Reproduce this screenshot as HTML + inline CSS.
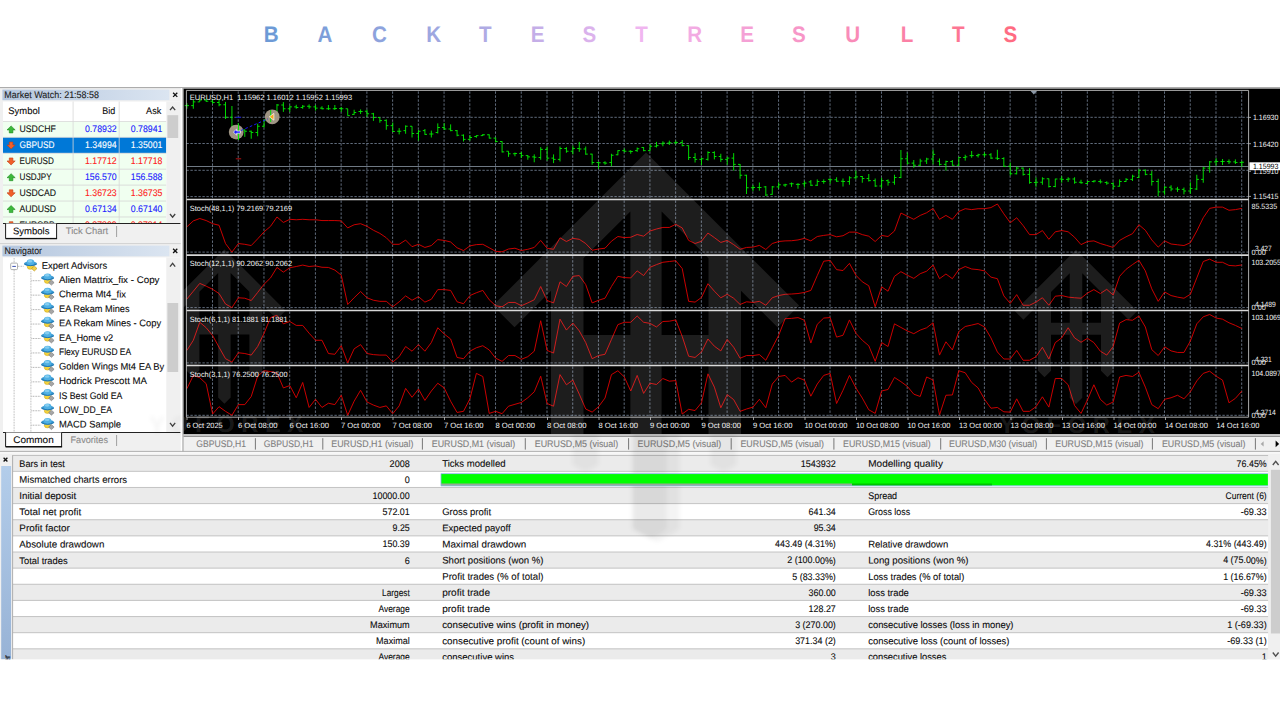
<!DOCTYPE html>
<html lang="en">
<head>
<meta charset="utf-8">
<title>Backtest Results</title>
<style>
html,body{margin:0;padding:0;background:#fff;}
body{width:1280px;height:720px;overflow:hidden;position:relative;font-family:"Liberation Sans",Arial,sans-serif;}
h1{margin:0;position:absolute;left:0;top:0;width:1280px;height:70px;font-size:21.6px;font-weight:bold;}
h1 svg{display:block;}
#shot{position:absolute;left:0;top:0;width:1280px;height:720px;}
#shot svg{display:block;}
svg text{font-family:"Liberation Sans",Arial,sans-serif;white-space:pre;text-rendering:geometricPrecision;}
</style>
</head>
<body>
<h1 aria-label="BACKTEST RESULTS">
<svg width="1280" height="70" viewBox="0 0 1280 70">
<defs>
<linearGradient id="gHead" gradientUnits="userSpaceOnUse" x1="288.04" y1="0" x2="1105.43" y2="0">
<stop offset="0" stop-color="#6c9ad6"/>
<stop offset="0.27" stop-color="#a8a9e2"/>
<stop offset="0.5" stop-color="#f0b6f0"/>
<stop offset="0.75" stop-color="#f890c0"/>
<stop offset="1" stop-color="#ff6a80"/>
</linearGradient>
</defs>
<text y="41.8" font-size="22.4" font-weight="bold" fill="url(#gHead)" transform="scale(0.92 1)"><tspan x="286.75 345.17 404.3 463.38 520.77 577.04 633.18 690.55">BACKTEST</tspan> <tspan x="746.91 804.76 861.01 918.81 979.03 1034.9 1090.63">RESULTS</tspan></text>
</svg>
</h1>
<div id="shot">
<svg width="1280" height="720" viewBox="0 0 1280 720">
<defs>
<linearGradient id="gTitle" x1="0" y1="0" x2="1" y2="0">
<stop offset="0" stop-color="#b4c6de"/>
<stop offset="1" stop-color="#dbe5f1"/>
</linearGradient>
<linearGradient id="gStrip" x1="0" y1="0" x2="0" y2="1">
<stop offset="0" stop-color="#b3cdea"/>
<stop offset="1" stop-color="#98b3d6"/>
</linearGradient>
<clipPath id="cShot"><rect x="0" y="87.6" width="1280" height="571.6"/></clipPath>
<clipPath id="cMW"><rect x="3" y="121" width="163.3" height="102.2"/></clipPath>
<clipPath id="cNav"><rect x="3" y="257.4" width="163.3" height="174.8"/></clipPath>
<clipPath id="cLight"><path clip-rule="evenodd" d="M0 87.6H1280V659.2H0Z M183.6 88.6H1280V434.2H183.6Z M441 473.6H1268V485.8H441Z"/></clipPath>
<clipPath id="cChart"><rect x="183.6" y="88.6" width="1096.4" height="345.6"/></clipPath>
<clipPath id="cTester"><rect x="12.6" y="455" width="1256" height="204.2"/></clipPath>
<filter id="fBlur" x="-20%" y="-20%" width="140%" height="140%"><feGaussianBlur stdDeviation="2"/></filter><g id="wm"><path fill-rule="evenodd" d="M224.4 249.4 L285.65 310.65 L277 319.3 L262.4 304.7 L262.4 370.4 L255.9 376.9 L249.4 370.4 L249.4 334.4 L230.65 334.4 L230.65 397.4 L224.4 403.7 L218.15 397.4 L218.15 334.4 L199.4 334.4 L199.4 370.4 L192.9 376.9 L186.4 370.4 L186.4 304.7 L171.8 319.3 L163.15 310.65 Z M199.4 322.4 L199.4 291.7 L218.15 272.95 L218.15 322.4 Z M249.4 322.4 L249.4 291.7 L230.65 272.95 L230.65 322.4 Z"/><text x="147.7" y="432.2" font-size="23.6" font-weight="bold" textLength="155.4" lengthAdjust="spacing">YOFOREX</text><path fill-rule="evenodd" d="M646 152.5 L799.12 305.62 L777.5 327.25 L741 290.75 L741 455 L724.75 471.25 L708.5 455 L708.5 365 L661.62 365 L661.62 522.5 L646 538.25 L630.38 522.5 L630.38 365 L583.5 365 L583.5 455 L567.25 471.25 L551 455 L551 290.75 L514.5 327.25 L492.88 305.62 Z M583.5 335 L583.5 258.25 L630.38 211.38 L630.38 335 Z M708.5 335 L708.5 258.25 L661.62 211.38 L661.62 335 Z"/><path fill-rule="evenodd" d="M1076 249.8 L1137.25 311.05 L1128.6 319.7 L1114 305.1 L1114 370.8 L1107.5 377.3 L1101 370.8 L1101 334.8 L1082.25 334.8 L1082.25 397.8 L1076 404.1 L1069.75 397.8 L1069.75 334.8 L1051 334.8 L1051 370.8 L1044.5 377.3 L1038 370.8 L1038 305.1 L1023.4 319.7 L1014.75 311.05 Z M1051 322.8 L1051 292.1 L1069.75 273.35 L1069.75 322.8 Z M1101 322.8 L1101 292.1 L1082.25 273.35 L1082.25 322.8 Z"/><text x="999.3" y="432.6" font-size="23.6" font-weight="bold" textLength="155.4" lengthAdjust="spacing">YOFOREX</text></g><g id="wms"><text x="147.7" y="432.2" font-size="23.6" font-weight="bold" textLength="155.4" lengthAdjust="spacing">YOFOREX</text><text x="999.3" y="432.6" font-size="23.6" font-weight="bold" textLength="155.4" lengthAdjust="spacing">YOFOREX</text><path d="M571 430 H597 V464 L584 471 L571 464 Z"/><path d="M631 430 H678 V528 L656 541 L631 528 Z"/><path d="M631 430 H665 V528 L650 538 L631 528 Z"/><path d="M709 430 H735 V464 L722 471 L709 464 Z"/></g>
</defs>
<rect x="0" y="87.6" width="1280" height="571.6" fill="#f0f0f0"/>
<line x1="0" y1="87.6" x2="1280" y2="87.6" stroke="#9a9a9a" stroke-width="0.9"/>
<rect x="2.4" y="89.6" width="167" height="10.6" fill="url(#gTitle)"/>
<text transform="matrix(1 .0005 0 1 4.3 97.5)" font-size="9.6" fill="#1c1c1c" textLength="94.7" lengthAdjust="spacingAndGlyphs" stroke="#1c1c1c" stroke-width="0.1">Market Watch: 21:58:58</text>
<path d="M173.1 92.7 l4.2 4.2 M173.1 96.9 l4.2 -4.2" stroke="#111" stroke-width="1.3" fill="none"/>
<rect x="3" y="101.6" width="177.5" height="122" fill="#ffffff"/>
<rect x="166.3" y="101.6" width="14.2" height="122" fill="#f0f0f0"/>
<g clip-path="url(#cMW)">
<rect x="3" y="121.4" width="163.3" height="15.93" fill="#f0fff0"/>
<path d="M11.1 125.9 l4.1 4 h-2.3 v3 h-3.6 v-3 h-2.3 z" fill="#3cb93c" stroke="#1e8a1e" stroke-width="0.6"/>
<text transform="matrix(1 .0005 0 1 19.5 132.1)" font-size="9.6" fill="#111" textLength="36.3" lengthAdjust="spacingAndGlyphs" stroke="#111" stroke-width="0.1">USDCHF</text>
<text transform="matrix(1 .0005 0 1 116.6 132.1)" font-size="9.6" fill="#2020ff" textLength="31.6" lengthAdjust="spacingAndGlyphs" text-anchor="end" stroke="#2020ff" stroke-width="0.1">0.78932</text>
<text transform="matrix(1 .0005 0 1 162.4 132.1)" font-size="9.6" fill="#2020ff" textLength="31.6" lengthAdjust="spacingAndGlyphs" text-anchor="end" stroke="#2020ff" stroke-width="0.1">0.78941</text>
<rect x="3" y="137.33" width="163.3" height="15.93" fill="#0078d7"/>
<path d="M11.1 149.03 l4.1 -4 h-2.3 v-3 h-3.6 v3 h-2.3 z" fill="#f0602a" stroke="#c23a10" stroke-width="0.6"/>
<text transform="matrix(1 .0005 0 1 19.5 148.03)" font-size="9.6" fill="#fff" textLength="35" lengthAdjust="spacingAndGlyphs" stroke="#fff" stroke-width="0.1">GBPUSD</text>
<text transform="matrix(1 .0005 0 1 116.6 148.03)" font-size="9.6" fill="#ffffff" textLength="31.6" lengthAdjust="spacingAndGlyphs" text-anchor="end" stroke="#ffffff" stroke-width="0.1">1.34994</text>
<text transform="matrix(1 .0005 0 1 162.4 148.03)" font-size="9.6" fill="#ffffff" textLength="31.6" lengthAdjust="spacingAndGlyphs" text-anchor="end" stroke="#ffffff" stroke-width="0.1">1.35001</text>
<rect x="3" y="153.26" width="163.3" height="15.93" fill="#f0fff0"/>
<path d="M11.1 164.96 l4.1 -4 h-2.3 v-3 h-3.6 v3 h-2.3 z" fill="#f0602a" stroke="#c23a10" stroke-width="0.6"/>
<text transform="matrix(1 .0005 0 1 19.5 163.96)" font-size="9.6" fill="#111" textLength="34.4" lengthAdjust="spacingAndGlyphs" stroke="#111" stroke-width="0.1">EURUSD</text>
<text transform="matrix(1 .0005 0 1 116.6 163.96)" font-size="9.6" fill="#ff2020" textLength="31.6" lengthAdjust="spacingAndGlyphs" text-anchor="end" stroke="#ff2020" stroke-width="0.1">1.17712</text>
<text transform="matrix(1 .0005 0 1 162.4 163.96)" font-size="9.6" fill="#ff2020" textLength="31.6" lengthAdjust="spacingAndGlyphs" text-anchor="end" stroke="#ff2020" stroke-width="0.1">1.17718</text>
<rect x="3" y="169.19" width="163.3" height="15.93" fill="#f0fff0"/>
<path d="M11.1 173.69 l4.1 4 h-2.3 v3 h-3.6 v-3 h-2.3 z" fill="#3cb93c" stroke="#1e8a1e" stroke-width="0.6"/>
<text transform="matrix(1 .0005 0 1 19.5 179.89)" font-size="9.6" fill="#111" textLength="32.2" lengthAdjust="spacingAndGlyphs" stroke="#111" stroke-width="0.1">USDJPY</text>
<text transform="matrix(1 .0005 0 1 116.6 179.89)" font-size="9.6" fill="#2020ff" textLength="31.6" lengthAdjust="spacingAndGlyphs" text-anchor="end" stroke="#2020ff" stroke-width="0.1">156.570</text>
<text transform="matrix(1 .0005 0 1 162.4 179.89)" font-size="9.6" fill="#2020ff" textLength="31.6" lengthAdjust="spacingAndGlyphs" text-anchor="end" stroke="#2020ff" stroke-width="0.1">156.588</text>
<rect x="3" y="185.12" width="163.3" height="15.93" fill="#f0fff0"/>
<path d="M11.1 196.82 l4.1 -4 h-2.3 v-3 h-3.6 v3 h-2.3 z" fill="#f0602a" stroke="#c23a10" stroke-width="0.6"/>
<text transform="matrix(1 .0005 0 1 19.5 195.82)" font-size="9.6" fill="#111" textLength="36.6" lengthAdjust="spacingAndGlyphs" stroke="#111" stroke-width="0.1">USDCAD</text>
<text transform="matrix(1 .0005 0 1 116.6 195.82)" font-size="9.6" fill="#ff2020" textLength="31.6" lengthAdjust="spacingAndGlyphs" text-anchor="end" stroke="#ff2020" stroke-width="0.1">1.36723</text>
<text transform="matrix(1 .0005 0 1 162.4 195.82)" font-size="9.6" fill="#ff2020" textLength="31.6" lengthAdjust="spacingAndGlyphs" text-anchor="end" stroke="#ff2020" stroke-width="0.1">1.36735</text>
<rect x="3" y="201.05" width="163.3" height="15.93" fill="#f0fff0"/>
<path d="M11.1 205.55 l4.1 4 h-2.3 v3 h-3.6 v-3 h-2.3 z" fill="#3cb93c" stroke="#1e8a1e" stroke-width="0.6"/>
<text transform="matrix(1 .0005 0 1 19.5 211.75)" font-size="9.6" fill="#111" textLength="36.6" lengthAdjust="spacingAndGlyphs" stroke="#111" stroke-width="0.1">AUDUSD</text>
<text transform="matrix(1 .0005 0 1 116.6 211.75)" font-size="9.6" fill="#2020ff" textLength="31.6" lengthAdjust="spacingAndGlyphs" text-anchor="end" stroke="#2020ff" stroke-width="0.1">0.67134</text>
<text transform="matrix(1 .0005 0 1 162.4 211.75)" font-size="9.6" fill="#2020ff" textLength="31.6" lengthAdjust="spacingAndGlyphs" text-anchor="end" stroke="#2020ff" stroke-width="0.1">0.67140</text>
<rect x="3" y="216.98" width="163.3" height="15.93" fill="#f0fff0"/>
<path d="M11.1 228.68 l4.1 -4 h-2.3 v-3 h-3.6 v3 h-2.3 z" fill="#f0602a" stroke="#c23a10" stroke-width="0.6"/>
<text transform="matrix(1 .0005 0 1 19.5 227.68)" font-size="9.6" fill="#111" textLength="35" lengthAdjust="spacingAndGlyphs" stroke="#111" stroke-width="0.1">EURGBP</text>
<text transform="matrix(1 .0005 0 1 116.6 227.68)" font-size="9.6" fill="#ff2020" textLength="31.6" lengthAdjust="spacingAndGlyphs" text-anchor="end" stroke="#ff2020" stroke-width="0.1">0.87209</text>
<text transform="matrix(1 .0005 0 1 162.4 227.68)" font-size="9.6" fill="#ff2020" textLength="31.6" lengthAdjust="spacingAndGlyphs" text-anchor="end" stroke="#ff2020" stroke-width="0.1">0.87214</text>
<line x1="3" y1="121.4" x2="166.3" y2="121.4" stroke="#d4d4d4" stroke-width="0.8"/>
<line x1="3" y1="137.33" x2="166.3" y2="137.33" stroke="#d4d4d4" stroke-width="0.8"/>
<line x1="3" y1="153.26" x2="166.3" y2="153.26" stroke="#d4d4d4" stroke-width="0.8"/>
<line x1="3" y1="169.19" x2="166.3" y2="169.19" stroke="#d4d4d4" stroke-width="0.8"/>
<line x1="3" y1="185.12" x2="166.3" y2="185.12" stroke="#d4d4d4" stroke-width="0.8"/>
<line x1="3" y1="201.05" x2="166.3" y2="201.05" stroke="#d4d4d4" stroke-width="0.8"/>
<line x1="3" y1="216.98" x2="166.3" y2="216.98" stroke="#d4d4d4" stroke-width="0.8"/>
<line x1="3" y1="232.91" x2="166.3" y2="232.91" stroke="#d4d4d4" stroke-width="0.8"/>
</g>
<line x1="73.1" y1="101.6" x2="73.1" y2="223.3" stroke="#d8d8d8" stroke-width="0.8"/>
<line x1="119.2" y1="101.6" x2="119.2" y2="223.3" stroke="#d8d8d8" stroke-width="0.8"/>
<text transform="matrix(1 .0005 0 1 8.3 114.1)" font-size="9.6" fill="#0a0a0a" textLength="31.5" lengthAdjust="spacingAndGlyphs" stroke="#0a0a0a" stroke-width="0.1">Symbol</text>
<text transform="matrix(1 .0005 0 1 115.2 114.1)" font-size="9.6" fill="#0a0a0a" textLength="12.9" lengthAdjust="spacingAndGlyphs" text-anchor="end" stroke="#0a0a0a" stroke-width="0.1">Bid</text>
<text transform="matrix(1 .0005 0 1 161.3 114.1)" font-size="9.6" fill="#0a0a0a" textLength="15.2" lengthAdjust="spacingAndGlyphs" text-anchor="end" stroke="#0a0a0a" stroke-width="0.1">Ask</text>
<path d="M170 110.21 l2.6 -3.22 l2.6 3.22" stroke="#404040" stroke-width="1.3" fill="none"/>
<rect x="167.4" y="115.2" width="10.8" height="22.8" fill="#cdcdcd"/>
<path d="M170 213.99 l2.6 3.22 l2.6 -3.22" stroke="#404040" stroke-width="1.3" fill="none"/>
<line x1="3" y1="223.5" x2="180.5" y2="223.5" stroke="#222" stroke-width="1"/>
<rect x="5.6" y="223.5" width="51" height="15.2" fill="#ffffff"/>
<path d="M5.6 223.5 V238.4 H56.6 V223.5" fill="none" stroke="#1a1a1a" stroke-width="1"/>
<line x1="5.6" y1="238.6" x2="57.1" y2="238.6" stroke="#111" stroke-width="1.4"/>
<text transform="matrix(1 .0005 0 1 13 234.3)" font-size="9.6" fill="#0a0a0a" textLength="36.5" lengthAdjust="spacingAndGlyphs" stroke="#0a0a0a" stroke-width="0.1">Symbols</text>
<text transform="matrix(1 .0005 0 1 65.8 234.3)" font-size="9.6" fill="#8a8a8a" textLength="42.3" lengthAdjust="spacingAndGlyphs" stroke="#8a8a8a" stroke-width="0.1">Tick Chart</text>
<line x1="116.6" y1="226" x2="116.6" y2="237" stroke="#8a8a8a" stroke-width="0.8"/>
<line x1="0" y1="243.6" x2="181" y2="243.6" stroke="#c8c8c8" stroke-width="0.8"/>
<rect x="2.4" y="245.6" width="167" height="10.7" fill="url(#gTitle)"/>
<text transform="matrix(1 .0005 0 1 4.5 253.6)" font-size="9.6" fill="#1c1c1c" textLength="37.5" lengthAdjust="spacingAndGlyphs" stroke="#1c1c1c" stroke-width="0.1">Navigator</text>
<path d="M173.1 248.8 l4.2 4.2 M173.1 253 l4.2 -4.2" stroke="#111" stroke-width="1.3" fill="none"/>
<rect x="3" y="257.4" width="177.5" height="175" fill="#ffffff"/>
<rect x="166.3" y="257.4" width="14.2" height="175" fill="#f0f0f0"/>
<path d="M170 266.61 l2.6 -3.22 l2.6 3.22" stroke="#404040" stroke-width="1.3" fill="none"/>
<rect x="167.4" y="303" width="10.8" height="69" fill="#cdcdcd"/>
<path d="M170 422.89 l2.6 3.22 l2.6 -3.22" stroke="#404040" stroke-width="1.3" fill="none"/>
<line x1="14.1" y1="258" x2="14.1" y2="263" stroke="#9a9a9a" stroke-width="0.8" stroke-dasharray="0.8 0.8"/>
<line x1="14.1" y1="270" x2="14.1" y2="432" stroke="#9a9a9a" stroke-width="0.8" stroke-dasharray="0.8 0.8"/>
<line x1="30.9" y1="271.5" x2="30.9" y2="432" stroke="#9a9a9a" stroke-width="0.8" stroke-dasharray="0.8 0.8"/>
<line x1="18" y1="266.3" x2="23.5" y2="266.3" stroke="#9a9a9a" stroke-width="0.8" stroke-dasharray="0.8 0.8"/>
<rect x="10.7" y="263.1" width="6.8" height="6.5" rx="1" fill="#fff" stroke="#9a9a9a" stroke-width="0.8"/>
<line x1="12.3" y1="266.4" x2="15.9" y2="266.4" stroke="#3a4fb0" stroke-width="1"/>
<g transform="translate(24 259)"><ellipse cx="6.3" cy="7.7" rx="3.1" ry="2.6" fill="#f4d23c" stroke="#c9a21a" stroke-width="0.5"/><ellipse cx="6.5" cy="4.7" rx="6.4" ry="2.4" fill="#3a98d2"/><ellipse cx="6.5" cy="3.3" rx="3.8" ry="3.0" fill="#4fb0e4"/><ellipse cx="6.0" cy="2.2" rx="2.4" ry="1.3" fill="#8fd2f2" fill-opacity="0.85"/><path d="M0.3 5.0 Q6.5 8.4 12.7 5.0" stroke="#1f74ac" stroke-width="0.9" fill="none"/><path d="M10.3 7.0 l2.7 2.5 l-2.7 2.5 l-2.7 -2.5 z" fill="#f3d24a" stroke="#b8901a" stroke-width="0.6"/></g>
<text transform="matrix(1 .0005 0 1 41.8 268.8)" font-size="9.6" fill="#0a0a0a" textLength="65.3" lengthAdjust="spacingAndGlyphs" stroke="#0a0a0a" stroke-width="0.1">Expert Advisors</text>
<g clip-path="url(#cNav)">
<line x1="31.5" y1="280.7" x2="40.5" y2="280.7" stroke="#8a8a8a" stroke-width="0.8" stroke-dasharray="0.8 0.8"/>
<g transform="translate(41.1 273.1)"><ellipse cx="6.3" cy="7.7" rx="3.1" ry="2.6" fill="#f4d23c" stroke="#c9a21a" stroke-width="0.5"/><ellipse cx="6.5" cy="4.7" rx="6.4" ry="2.4" fill="#3a98d2"/><ellipse cx="6.5" cy="3.3" rx="3.8" ry="3.0" fill="#4fb0e4"/><ellipse cx="6.0" cy="2.2" rx="2.4" ry="1.3" fill="#8fd2f2" fill-opacity="0.85"/><path d="M0.3 5.0 Q6.5 8.4 12.7 5.0" stroke="#1f74ac" stroke-width="0.9" fill="none"/><path d="M10.3 7.0 l2.7 2.5 l-2.7 2.5 l-2.7 -2.5 z" fill="#a6a6a6" stroke="#757575" stroke-width="0.6"/></g>
<text transform="matrix(1 .0005 0 1 59 282.9)" font-size="9.6" fill="#0a0a0a" textLength="100.5" lengthAdjust="spacingAndGlyphs" stroke="#0a0a0a" stroke-width="0.1">Alien Mattrix_fix - Copy</text>
<line x1="31.5" y1="295.15" x2="40.5" y2="295.15" stroke="#8a8a8a" stroke-width="0.8" stroke-dasharray="0.8 0.8"/>
<g transform="translate(41.1 287.55)"><ellipse cx="6.3" cy="7.7" rx="3.1" ry="2.6" fill="#f4d23c" stroke="#c9a21a" stroke-width="0.5"/><ellipse cx="6.5" cy="4.7" rx="6.4" ry="2.4" fill="#3a98d2"/><ellipse cx="6.5" cy="3.3" rx="3.8" ry="3.0" fill="#4fb0e4"/><ellipse cx="6.0" cy="2.2" rx="2.4" ry="1.3" fill="#8fd2f2" fill-opacity="0.85"/><path d="M0.3 5.0 Q6.5 8.4 12.7 5.0" stroke="#1f74ac" stroke-width="0.9" fill="none"/><path d="M10.3 7.0 l2.7 2.5 l-2.7 2.5 l-2.7 -2.5 z" fill="#a6a6a6" stroke="#757575" stroke-width="0.6"/></g>
<text transform="matrix(1 .0005 0 1 59 297.35)" font-size="9.6" fill="#0a0a0a" textLength="67" lengthAdjust="spacingAndGlyphs" stroke="#0a0a0a" stroke-width="0.1">Cherma Mt4_fix</text>
<line x1="31.5" y1="309.6" x2="40.5" y2="309.6" stroke="#8a8a8a" stroke-width="0.8" stroke-dasharray="0.8 0.8"/>
<g transform="translate(41.1 302)"><ellipse cx="6.3" cy="7.7" rx="3.1" ry="2.6" fill="#f4d23c" stroke="#c9a21a" stroke-width="0.5"/><ellipse cx="6.5" cy="4.7" rx="6.4" ry="2.4" fill="#3a98d2"/><ellipse cx="6.5" cy="3.3" rx="3.8" ry="3.0" fill="#4fb0e4"/><ellipse cx="6.0" cy="2.2" rx="2.4" ry="1.3" fill="#8fd2f2" fill-opacity="0.85"/><path d="M0.3 5.0 Q6.5 8.4 12.7 5.0" stroke="#1f74ac" stroke-width="0.9" fill="none"/><path d="M10.3 7.0 l2.7 2.5 l-2.7 2.5 l-2.7 -2.5 z" fill="#a6a6a6" stroke="#757575" stroke-width="0.6"/></g>
<text transform="matrix(1 .0005 0 1 59 311.8)" font-size="9.6" fill="#0a0a0a" textLength="70.6" lengthAdjust="spacingAndGlyphs" stroke="#0a0a0a" stroke-width="0.1">EA Rekam Mines</text>
<line x1="31.5" y1="324.05" x2="40.5" y2="324.05" stroke="#8a8a8a" stroke-width="0.8" stroke-dasharray="0.8 0.8"/>
<g transform="translate(41.1 316.45)"><ellipse cx="6.3" cy="7.7" rx="3.1" ry="2.6" fill="#f4d23c" stroke="#c9a21a" stroke-width="0.5"/><ellipse cx="6.5" cy="4.7" rx="6.4" ry="2.4" fill="#3a98d2"/><ellipse cx="6.5" cy="3.3" rx="3.8" ry="3.0" fill="#4fb0e4"/><ellipse cx="6.0" cy="2.2" rx="2.4" ry="1.3" fill="#8fd2f2" fill-opacity="0.85"/><path d="M0.3 5.0 Q6.5 8.4 12.7 5.0" stroke="#1f74ac" stroke-width="0.9" fill="none"/><path d="M10.3 7.0 l2.7 2.5 l-2.7 2.5 l-2.7 -2.5 z" fill="#a6a6a6" stroke="#757575" stroke-width="0.6"/></g>
<text transform="matrix(1 .0005 0 1 59 326.25)" font-size="9.6" fill="#0a0a0a" textLength="102.2" lengthAdjust="spacingAndGlyphs" stroke="#0a0a0a" stroke-width="0.1">EA Rekam Mines - Copy</text>
<line x1="31.5" y1="338.5" x2="40.5" y2="338.5" stroke="#8a8a8a" stroke-width="0.8" stroke-dasharray="0.8 0.8"/>
<g transform="translate(41.1 330.9)"><ellipse cx="6.3" cy="7.7" rx="3.1" ry="2.6" fill="#f4d23c" stroke="#c9a21a" stroke-width="0.5"/><ellipse cx="6.5" cy="4.7" rx="6.4" ry="2.4" fill="#3a98d2"/><ellipse cx="6.5" cy="3.3" rx="3.8" ry="3.0" fill="#4fb0e4"/><ellipse cx="6.0" cy="2.2" rx="2.4" ry="1.3" fill="#8fd2f2" fill-opacity="0.85"/><path d="M0.3 5.0 Q6.5 8.4 12.7 5.0" stroke="#1f74ac" stroke-width="0.9" fill="none"/><path d="M10.3 7.0 l2.7 2.5 l-2.7 2.5 l-2.7 -2.5 z" fill="#a6a6a6" stroke="#757575" stroke-width="0.6"/></g>
<text transform="matrix(1 .0005 0 1 59 340.7)" font-size="9.6" fill="#0a0a0a" textLength="54.2" lengthAdjust="spacingAndGlyphs" stroke="#0a0a0a" stroke-width="0.1">EA_Home v2</text>
<line x1="31.5" y1="352.95" x2="40.5" y2="352.95" stroke="#8a8a8a" stroke-width="0.8" stroke-dasharray="0.8 0.8"/>
<g transform="translate(41.1 345.35)"><ellipse cx="6.3" cy="7.7" rx="3.1" ry="2.6" fill="#f4d23c" stroke="#c9a21a" stroke-width="0.5"/><ellipse cx="6.5" cy="4.7" rx="6.4" ry="2.4" fill="#3a98d2"/><ellipse cx="6.5" cy="3.3" rx="3.8" ry="3.0" fill="#4fb0e4"/><ellipse cx="6.0" cy="2.2" rx="2.4" ry="1.3" fill="#8fd2f2" fill-opacity="0.85"/><path d="M0.3 5.0 Q6.5 8.4 12.7 5.0" stroke="#1f74ac" stroke-width="0.9" fill="none"/><path d="M10.3 7.0 l2.7 2.5 l-2.7 2.5 l-2.7 -2.5 z" fill="#a6a6a6" stroke="#757575" stroke-width="0.6"/></g>
<text transform="matrix(1 .0005 0 1 59 355.15)" font-size="9.6" fill="#0a0a0a" textLength="72.2" lengthAdjust="spacingAndGlyphs" stroke="#0a0a0a" stroke-width="0.1">Flexy EURUSD EA</text>
<line x1="31.5" y1="367.4" x2="40.5" y2="367.4" stroke="#8a8a8a" stroke-width="0.8" stroke-dasharray="0.8 0.8"/>
<g transform="translate(41.1 359.8)"><ellipse cx="6.3" cy="7.7" rx="3.1" ry="2.6" fill="#f4d23c" stroke="#c9a21a" stroke-width="0.5"/><ellipse cx="6.5" cy="4.7" rx="6.4" ry="2.4" fill="#3a98d2"/><ellipse cx="6.5" cy="3.3" rx="3.8" ry="3.0" fill="#4fb0e4"/><ellipse cx="6.0" cy="2.2" rx="2.4" ry="1.3" fill="#8fd2f2" fill-opacity="0.85"/><path d="M0.3 5.0 Q6.5 8.4 12.7 5.0" stroke="#1f74ac" stroke-width="0.9" fill="none"/><path d="M10.3 7.0 l2.7 2.5 l-2.7 2.5 l-2.7 -2.5 z" fill="#a6a6a6" stroke="#757575" stroke-width="0.6"/></g>
<text transform="matrix(1 .0005 0 1 59 369.6)" font-size="9.6" fill="#0a0a0a" textLength="105.2" lengthAdjust="spacingAndGlyphs" stroke="#0a0a0a" stroke-width="0.1">Golden Wings Mt4 EA By</text>
<line x1="31.5" y1="381.85" x2="40.5" y2="381.85" stroke="#8a8a8a" stroke-width="0.8" stroke-dasharray="0.8 0.8"/>
<g transform="translate(41.1 374.25)"><ellipse cx="6.3" cy="7.7" rx="3.1" ry="2.6" fill="#f4d23c" stroke="#c9a21a" stroke-width="0.5"/><ellipse cx="6.5" cy="4.7" rx="6.4" ry="2.4" fill="#3a98d2"/><ellipse cx="6.5" cy="3.3" rx="3.8" ry="3.0" fill="#4fb0e4"/><ellipse cx="6.0" cy="2.2" rx="2.4" ry="1.3" fill="#8fd2f2" fill-opacity="0.85"/><path d="M0.3 5.0 Q6.5 8.4 12.7 5.0" stroke="#1f74ac" stroke-width="0.9" fill="none"/><path d="M10.3 7.0 l2.7 2.5 l-2.7 2.5 l-2.7 -2.5 z" fill="#a6a6a6" stroke="#757575" stroke-width="0.6"/></g>
<text transform="matrix(1 .0005 0 1 59 384.05)" font-size="9.6" fill="#0a0a0a" textLength="88" lengthAdjust="spacingAndGlyphs" stroke="#0a0a0a" stroke-width="0.1">Hodrick Prescott MA</text>
<line x1="31.5" y1="396.3" x2="40.5" y2="396.3" stroke="#8a8a8a" stroke-width="0.8" stroke-dasharray="0.8 0.8"/>
<g transform="translate(41.1 388.7)"><ellipse cx="6.3" cy="7.7" rx="3.1" ry="2.6" fill="#f4d23c" stroke="#c9a21a" stroke-width="0.5"/><ellipse cx="6.5" cy="4.7" rx="6.4" ry="2.4" fill="#3a98d2"/><ellipse cx="6.5" cy="3.3" rx="3.8" ry="3.0" fill="#4fb0e4"/><ellipse cx="6.0" cy="2.2" rx="2.4" ry="1.3" fill="#8fd2f2" fill-opacity="0.85"/><path d="M0.3 5.0 Q6.5 8.4 12.7 5.0" stroke="#1f74ac" stroke-width="0.9" fill="none"/><path d="M10.3 7.0 l2.7 2.5 l-2.7 2.5 l-2.7 -2.5 z" fill="#a6a6a6" stroke="#757575" stroke-width="0.6"/></g>
<text transform="matrix(1 .0005 0 1 59 398.5)" font-size="9.6" fill="#0a0a0a" textLength="63.4" lengthAdjust="spacingAndGlyphs" stroke="#0a0a0a" stroke-width="0.1">IS Best Gold EA</text>
<line x1="31.5" y1="410.75" x2="40.5" y2="410.75" stroke="#8a8a8a" stroke-width="0.8" stroke-dasharray="0.8 0.8"/>
<g transform="translate(41.1 403.15)"><ellipse cx="6.3" cy="7.7" rx="3.1" ry="2.6" fill="#f4d23c" stroke="#c9a21a" stroke-width="0.5"/><ellipse cx="6.5" cy="4.7" rx="6.4" ry="2.4" fill="#3a98d2"/><ellipse cx="6.5" cy="3.3" rx="3.8" ry="3.0" fill="#4fb0e4"/><ellipse cx="6.0" cy="2.2" rx="2.4" ry="1.3" fill="#8fd2f2" fill-opacity="0.85"/><path d="M0.3 5.0 Q6.5 8.4 12.7 5.0" stroke="#1f74ac" stroke-width="0.9" fill="none"/><path d="M10.3 7.0 l2.7 2.5 l-2.7 2.5 l-2.7 -2.5 z" fill="#a6a6a6" stroke="#757575" stroke-width="0.6"/></g>
<text transform="matrix(1 .0005 0 1 59 412.95)" font-size="9.6" fill="#0a0a0a" textLength="53" lengthAdjust="spacingAndGlyphs" stroke="#0a0a0a" stroke-width="0.1">LOW_DD_EA</text>
<line x1="31.5" y1="425.2" x2="40.5" y2="425.2" stroke="#8a8a8a" stroke-width="0.8" stroke-dasharray="0.8 0.8"/>
<g transform="translate(41.1 417.6)"><ellipse cx="6.3" cy="7.7" rx="3.1" ry="2.6" fill="#f4d23c" stroke="#c9a21a" stroke-width="0.5"/><ellipse cx="6.5" cy="4.7" rx="6.4" ry="2.4" fill="#3a98d2"/><ellipse cx="6.5" cy="3.3" rx="3.8" ry="3.0" fill="#4fb0e4"/><ellipse cx="6.0" cy="2.2" rx="2.4" ry="1.3" fill="#8fd2f2" fill-opacity="0.85"/><path d="M0.3 5.0 Q6.5 8.4 12.7 5.0" stroke="#1f74ac" stroke-width="0.9" fill="none"/><path d="M10.3 7.0 l2.7 2.5 l-2.7 2.5 l-2.7 -2.5 z" fill="#a6a6a6" stroke="#757575" stroke-width="0.6"/></g>
<text transform="matrix(1 .0005 0 1 59 427.4)" font-size="9.6" fill="#0a0a0a" textLength="62" lengthAdjust="spacingAndGlyphs" stroke="#0a0a0a" stroke-width="0.1">MACD Sample</text>
</g>
<line x1="3" y1="432.5" x2="180.5" y2="432.5" stroke="#222" stroke-width="1"/>
<rect x="5.6" y="432.5" width="56" height="15" fill="#ffffff"/>
<path d="M5.6 432.5 V446.6 H61.6 V432.5" fill="none" stroke="#1a1a1a" stroke-width="1"/>
<line x1="5.6" y1="446.7" x2="62.1" y2="446.7" stroke="#111" stroke-width="1.4"/>
<text transform="matrix(1 .0005 0 1 13.2 443)" font-size="9.6" fill="#0a0a0a" textLength="40.5" lengthAdjust="spacingAndGlyphs" stroke="#0a0a0a" stroke-width="0.1">Common</text>
<text transform="matrix(1 .0005 0 1 70.5 443)" font-size="9.6" fill="#8a8a8a" textLength="37.5" lengthAdjust="spacingAndGlyphs" stroke="#8a8a8a" stroke-width="0.1">Favorites</text>
<line x1="116.6" y1="435" x2="116.6" y2="446" stroke="#8a8a8a" stroke-width="0.8"/>
<line x1="181.4" y1="88" x2="181.4" y2="451.5" stroke="#ffffff" stroke-width="1.2"/>
<line x1="183" y1="88" x2="183" y2="451.5" stroke="#a0a0a0" stroke-width="1"/>
<rect x="183.6" y="88.6" width="1096.4" height="345.6" fill="#000000"/>
<line x1="212.5" y1="91.4" x2="212.5" y2="198.3" stroke="#78879a" stroke-width="0.8" stroke-dasharray="2.4 1.6"/>
<line x1="238.23" y1="91.4" x2="238.23" y2="198.3" stroke="#78879a" stroke-width="0.8" stroke-dasharray="2.4 1.6"/>
<line x1="263.96" y1="91.4" x2="263.96" y2="198.3" stroke="#78879a" stroke-width="0.8" stroke-dasharray="2.4 1.6"/>
<line x1="289.69" y1="91.4" x2="289.69" y2="198.3" stroke="#78879a" stroke-width="0.8" stroke-dasharray="2.4 1.6"/>
<line x1="315.42" y1="91.4" x2="315.42" y2="198.3" stroke="#78879a" stroke-width="0.8" stroke-dasharray="2.4 1.6"/>
<line x1="341.15" y1="91.4" x2="341.15" y2="198.3" stroke="#78879a" stroke-width="0.8" stroke-dasharray="2.4 1.6"/>
<line x1="366.88" y1="91.4" x2="366.88" y2="198.3" stroke="#78879a" stroke-width="0.8" stroke-dasharray="2.4 1.6"/>
<line x1="392.61" y1="91.4" x2="392.61" y2="198.3" stroke="#78879a" stroke-width="0.8" stroke-dasharray="2.4 1.6"/>
<line x1="418.34" y1="91.4" x2="418.34" y2="198.3" stroke="#78879a" stroke-width="0.8" stroke-dasharray="2.4 1.6"/>
<line x1="444.07" y1="91.4" x2="444.07" y2="198.3" stroke="#78879a" stroke-width="0.8" stroke-dasharray="2.4 1.6"/>
<line x1="469.8" y1="91.4" x2="469.8" y2="198.3" stroke="#78879a" stroke-width="0.8" stroke-dasharray="2.4 1.6"/>
<line x1="495.53" y1="91.4" x2="495.53" y2="198.3" stroke="#78879a" stroke-width="0.8" stroke-dasharray="2.4 1.6"/>
<line x1="521.26" y1="91.4" x2="521.26" y2="198.3" stroke="#78879a" stroke-width="0.8" stroke-dasharray="2.4 1.6"/>
<line x1="546.99" y1="91.4" x2="546.99" y2="198.3" stroke="#78879a" stroke-width="0.8" stroke-dasharray="2.4 1.6"/>
<line x1="572.72" y1="91.4" x2="572.72" y2="198.3" stroke="#78879a" stroke-width="0.8" stroke-dasharray="2.4 1.6"/>
<line x1="598.45" y1="91.4" x2="598.45" y2="198.3" stroke="#78879a" stroke-width="0.8" stroke-dasharray="2.4 1.6"/>
<line x1="624.18" y1="91.4" x2="624.18" y2="198.3" stroke="#78879a" stroke-width="0.8" stroke-dasharray="2.4 1.6"/>
<line x1="649.91" y1="91.4" x2="649.91" y2="198.3" stroke="#78879a" stroke-width="0.8" stroke-dasharray="2.4 1.6"/>
<line x1="675.64" y1="91.4" x2="675.64" y2="198.3" stroke="#78879a" stroke-width="0.8" stroke-dasharray="2.4 1.6"/>
<line x1="701.37" y1="91.4" x2="701.37" y2="198.3" stroke="#78879a" stroke-width="0.8" stroke-dasharray="2.4 1.6"/>
<line x1="727.1" y1="91.4" x2="727.1" y2="198.3" stroke="#78879a" stroke-width="0.8" stroke-dasharray="2.4 1.6"/>
<line x1="752.83" y1="91.4" x2="752.83" y2="198.3" stroke="#78879a" stroke-width="0.8" stroke-dasharray="2.4 1.6"/>
<line x1="778.56" y1="91.4" x2="778.56" y2="198.3" stroke="#78879a" stroke-width="0.8" stroke-dasharray="2.4 1.6"/>
<line x1="804.29" y1="91.4" x2="804.29" y2="198.3" stroke="#78879a" stroke-width="0.8" stroke-dasharray="2.4 1.6"/>
<line x1="830.02" y1="91.4" x2="830.02" y2="198.3" stroke="#78879a" stroke-width="0.8" stroke-dasharray="2.4 1.6"/>
<line x1="855.75" y1="91.4" x2="855.75" y2="198.3" stroke="#78879a" stroke-width="0.8" stroke-dasharray="2.4 1.6"/>
<line x1="881.48" y1="91.4" x2="881.48" y2="198.3" stroke="#78879a" stroke-width="0.8" stroke-dasharray="2.4 1.6"/>
<line x1="907.21" y1="91.4" x2="907.21" y2="198.3" stroke="#78879a" stroke-width="0.8" stroke-dasharray="2.4 1.6"/>
<line x1="932.94" y1="91.4" x2="932.94" y2="198.3" stroke="#78879a" stroke-width="0.8" stroke-dasharray="2.4 1.6"/>
<line x1="958.67" y1="91.4" x2="958.67" y2="198.3" stroke="#78879a" stroke-width="0.8" stroke-dasharray="2.4 1.6"/>
<line x1="984.4" y1="91.4" x2="984.4" y2="198.3" stroke="#78879a" stroke-width="0.8" stroke-dasharray="2.4 1.6"/>
<line x1="1010.13" y1="91.4" x2="1010.13" y2="198.3" stroke="#78879a" stroke-width="0.8" stroke-dasharray="2.4 1.6"/>
<line x1="1035.86" y1="91.4" x2="1035.86" y2="198.3" stroke="#78879a" stroke-width="0.8" stroke-dasharray="2.4 1.6"/>
<line x1="1061.59" y1="91.4" x2="1061.59" y2="198.3" stroke="#78879a" stroke-width="0.8" stroke-dasharray="2.4 1.6"/>
<line x1="1087.32" y1="91.4" x2="1087.32" y2="198.3" stroke="#78879a" stroke-width="0.8" stroke-dasharray="2.4 1.6"/>
<line x1="1113.05" y1="91.4" x2="1113.05" y2="198.3" stroke="#78879a" stroke-width="0.8" stroke-dasharray="2.4 1.6"/>
<line x1="1138.78" y1="91.4" x2="1138.78" y2="198.3" stroke="#78879a" stroke-width="0.8" stroke-dasharray="2.4 1.6"/>
<line x1="1164.51" y1="91.4" x2="1164.51" y2="198.3" stroke="#78879a" stroke-width="0.8" stroke-dasharray="2.4 1.6"/>
<line x1="1190.24" y1="91.4" x2="1190.24" y2="198.3" stroke="#78879a" stroke-width="0.8" stroke-dasharray="2.4 1.6"/>
<line x1="1215.97" y1="91.4" x2="1215.97" y2="198.3" stroke="#78879a" stroke-width="0.8" stroke-dasharray="2.4 1.6"/>
<line x1="1241.7" y1="91.4" x2="1241.7" y2="198.3" stroke="#78879a" stroke-width="0.8" stroke-dasharray="2.4 1.6"/>
<line x1="212.5" y1="200.5" x2="212.5" y2="254" stroke="#78879a" stroke-width="0.8" stroke-dasharray="2.4 1.6"/>
<line x1="238.23" y1="200.5" x2="238.23" y2="254" stroke="#78879a" stroke-width="0.8" stroke-dasharray="2.4 1.6"/>
<line x1="263.96" y1="200.5" x2="263.96" y2="254" stroke="#78879a" stroke-width="0.8" stroke-dasharray="2.4 1.6"/>
<line x1="289.69" y1="200.5" x2="289.69" y2="254" stroke="#78879a" stroke-width="0.8" stroke-dasharray="2.4 1.6"/>
<line x1="315.42" y1="200.5" x2="315.42" y2="254" stroke="#78879a" stroke-width="0.8" stroke-dasharray="2.4 1.6"/>
<line x1="341.15" y1="200.5" x2="341.15" y2="254" stroke="#78879a" stroke-width="0.8" stroke-dasharray="2.4 1.6"/>
<line x1="366.88" y1="200.5" x2="366.88" y2="254" stroke="#78879a" stroke-width="0.8" stroke-dasharray="2.4 1.6"/>
<line x1="392.61" y1="200.5" x2="392.61" y2="254" stroke="#78879a" stroke-width="0.8" stroke-dasharray="2.4 1.6"/>
<line x1="418.34" y1="200.5" x2="418.34" y2="254" stroke="#78879a" stroke-width="0.8" stroke-dasharray="2.4 1.6"/>
<line x1="444.07" y1="200.5" x2="444.07" y2="254" stroke="#78879a" stroke-width="0.8" stroke-dasharray="2.4 1.6"/>
<line x1="469.8" y1="200.5" x2="469.8" y2="254" stroke="#78879a" stroke-width="0.8" stroke-dasharray="2.4 1.6"/>
<line x1="495.53" y1="200.5" x2="495.53" y2="254" stroke="#78879a" stroke-width="0.8" stroke-dasharray="2.4 1.6"/>
<line x1="521.26" y1="200.5" x2="521.26" y2="254" stroke="#78879a" stroke-width="0.8" stroke-dasharray="2.4 1.6"/>
<line x1="546.99" y1="200.5" x2="546.99" y2="254" stroke="#78879a" stroke-width="0.8" stroke-dasharray="2.4 1.6"/>
<line x1="572.72" y1="200.5" x2="572.72" y2="254" stroke="#78879a" stroke-width="0.8" stroke-dasharray="2.4 1.6"/>
<line x1="598.45" y1="200.5" x2="598.45" y2="254" stroke="#78879a" stroke-width="0.8" stroke-dasharray="2.4 1.6"/>
<line x1="624.18" y1="200.5" x2="624.18" y2="254" stroke="#78879a" stroke-width="0.8" stroke-dasharray="2.4 1.6"/>
<line x1="649.91" y1="200.5" x2="649.91" y2="254" stroke="#78879a" stroke-width="0.8" stroke-dasharray="2.4 1.6"/>
<line x1="675.64" y1="200.5" x2="675.64" y2="254" stroke="#78879a" stroke-width="0.8" stroke-dasharray="2.4 1.6"/>
<line x1="701.37" y1="200.5" x2="701.37" y2="254" stroke="#78879a" stroke-width="0.8" stroke-dasharray="2.4 1.6"/>
<line x1="727.1" y1="200.5" x2="727.1" y2="254" stroke="#78879a" stroke-width="0.8" stroke-dasharray="2.4 1.6"/>
<line x1="752.83" y1="200.5" x2="752.83" y2="254" stroke="#78879a" stroke-width="0.8" stroke-dasharray="2.4 1.6"/>
<line x1="778.56" y1="200.5" x2="778.56" y2="254" stroke="#78879a" stroke-width="0.8" stroke-dasharray="2.4 1.6"/>
<line x1="804.29" y1="200.5" x2="804.29" y2="254" stroke="#78879a" stroke-width="0.8" stroke-dasharray="2.4 1.6"/>
<line x1="830.02" y1="200.5" x2="830.02" y2="254" stroke="#78879a" stroke-width="0.8" stroke-dasharray="2.4 1.6"/>
<line x1="855.75" y1="200.5" x2="855.75" y2="254" stroke="#78879a" stroke-width="0.8" stroke-dasharray="2.4 1.6"/>
<line x1="881.48" y1="200.5" x2="881.48" y2="254" stroke="#78879a" stroke-width="0.8" stroke-dasharray="2.4 1.6"/>
<line x1="907.21" y1="200.5" x2="907.21" y2="254" stroke="#78879a" stroke-width="0.8" stroke-dasharray="2.4 1.6"/>
<line x1="932.94" y1="200.5" x2="932.94" y2="254" stroke="#78879a" stroke-width="0.8" stroke-dasharray="2.4 1.6"/>
<line x1="958.67" y1="200.5" x2="958.67" y2="254" stroke="#78879a" stroke-width="0.8" stroke-dasharray="2.4 1.6"/>
<line x1="984.4" y1="200.5" x2="984.4" y2="254" stroke="#78879a" stroke-width="0.8" stroke-dasharray="2.4 1.6"/>
<line x1="1010.13" y1="200.5" x2="1010.13" y2="254" stroke="#78879a" stroke-width="0.8" stroke-dasharray="2.4 1.6"/>
<line x1="1035.86" y1="200.5" x2="1035.86" y2="254" stroke="#78879a" stroke-width="0.8" stroke-dasharray="2.4 1.6"/>
<line x1="1061.59" y1="200.5" x2="1061.59" y2="254" stroke="#78879a" stroke-width="0.8" stroke-dasharray="2.4 1.6"/>
<line x1="1087.32" y1="200.5" x2="1087.32" y2="254" stroke="#78879a" stroke-width="0.8" stroke-dasharray="2.4 1.6"/>
<line x1="1113.05" y1="200.5" x2="1113.05" y2="254" stroke="#78879a" stroke-width="0.8" stroke-dasharray="2.4 1.6"/>
<line x1="1138.78" y1="200.5" x2="1138.78" y2="254" stroke="#78879a" stroke-width="0.8" stroke-dasharray="2.4 1.6"/>
<line x1="1164.51" y1="200.5" x2="1164.51" y2="254" stroke="#78879a" stroke-width="0.8" stroke-dasharray="2.4 1.6"/>
<line x1="1190.24" y1="200.5" x2="1190.24" y2="254" stroke="#78879a" stroke-width="0.8" stroke-dasharray="2.4 1.6"/>
<line x1="1215.97" y1="200.5" x2="1215.97" y2="254" stroke="#78879a" stroke-width="0.8" stroke-dasharray="2.4 1.6"/>
<line x1="1241.7" y1="200.5" x2="1241.7" y2="254" stroke="#78879a" stroke-width="0.8" stroke-dasharray="2.4 1.6"/>
<line x1="212.5" y1="256.2" x2="212.5" y2="309.3" stroke="#78879a" stroke-width="0.8" stroke-dasharray="2.4 1.6"/>
<line x1="238.23" y1="256.2" x2="238.23" y2="309.3" stroke="#78879a" stroke-width="0.8" stroke-dasharray="2.4 1.6"/>
<line x1="263.96" y1="256.2" x2="263.96" y2="309.3" stroke="#78879a" stroke-width="0.8" stroke-dasharray="2.4 1.6"/>
<line x1="289.69" y1="256.2" x2="289.69" y2="309.3" stroke="#78879a" stroke-width="0.8" stroke-dasharray="2.4 1.6"/>
<line x1="315.42" y1="256.2" x2="315.42" y2="309.3" stroke="#78879a" stroke-width="0.8" stroke-dasharray="2.4 1.6"/>
<line x1="341.15" y1="256.2" x2="341.15" y2="309.3" stroke="#78879a" stroke-width="0.8" stroke-dasharray="2.4 1.6"/>
<line x1="366.88" y1="256.2" x2="366.88" y2="309.3" stroke="#78879a" stroke-width="0.8" stroke-dasharray="2.4 1.6"/>
<line x1="392.61" y1="256.2" x2="392.61" y2="309.3" stroke="#78879a" stroke-width="0.8" stroke-dasharray="2.4 1.6"/>
<line x1="418.34" y1="256.2" x2="418.34" y2="309.3" stroke="#78879a" stroke-width="0.8" stroke-dasharray="2.4 1.6"/>
<line x1="444.07" y1="256.2" x2="444.07" y2="309.3" stroke="#78879a" stroke-width="0.8" stroke-dasharray="2.4 1.6"/>
<line x1="469.8" y1="256.2" x2="469.8" y2="309.3" stroke="#78879a" stroke-width="0.8" stroke-dasharray="2.4 1.6"/>
<line x1="495.53" y1="256.2" x2="495.53" y2="309.3" stroke="#78879a" stroke-width="0.8" stroke-dasharray="2.4 1.6"/>
<line x1="521.26" y1="256.2" x2="521.26" y2="309.3" stroke="#78879a" stroke-width="0.8" stroke-dasharray="2.4 1.6"/>
<line x1="546.99" y1="256.2" x2="546.99" y2="309.3" stroke="#78879a" stroke-width="0.8" stroke-dasharray="2.4 1.6"/>
<line x1="572.72" y1="256.2" x2="572.72" y2="309.3" stroke="#78879a" stroke-width="0.8" stroke-dasharray="2.4 1.6"/>
<line x1="598.45" y1="256.2" x2="598.45" y2="309.3" stroke="#78879a" stroke-width="0.8" stroke-dasharray="2.4 1.6"/>
<line x1="624.18" y1="256.2" x2="624.18" y2="309.3" stroke="#78879a" stroke-width="0.8" stroke-dasharray="2.4 1.6"/>
<line x1="649.91" y1="256.2" x2="649.91" y2="309.3" stroke="#78879a" stroke-width="0.8" stroke-dasharray="2.4 1.6"/>
<line x1="675.64" y1="256.2" x2="675.64" y2="309.3" stroke="#78879a" stroke-width="0.8" stroke-dasharray="2.4 1.6"/>
<line x1="701.37" y1="256.2" x2="701.37" y2="309.3" stroke="#78879a" stroke-width="0.8" stroke-dasharray="2.4 1.6"/>
<line x1="727.1" y1="256.2" x2="727.1" y2="309.3" stroke="#78879a" stroke-width="0.8" stroke-dasharray="2.4 1.6"/>
<line x1="752.83" y1="256.2" x2="752.83" y2="309.3" stroke="#78879a" stroke-width="0.8" stroke-dasharray="2.4 1.6"/>
<line x1="778.56" y1="256.2" x2="778.56" y2="309.3" stroke="#78879a" stroke-width="0.8" stroke-dasharray="2.4 1.6"/>
<line x1="804.29" y1="256.2" x2="804.29" y2="309.3" stroke="#78879a" stroke-width="0.8" stroke-dasharray="2.4 1.6"/>
<line x1="830.02" y1="256.2" x2="830.02" y2="309.3" stroke="#78879a" stroke-width="0.8" stroke-dasharray="2.4 1.6"/>
<line x1="855.75" y1="256.2" x2="855.75" y2="309.3" stroke="#78879a" stroke-width="0.8" stroke-dasharray="2.4 1.6"/>
<line x1="881.48" y1="256.2" x2="881.48" y2="309.3" stroke="#78879a" stroke-width="0.8" stroke-dasharray="2.4 1.6"/>
<line x1="907.21" y1="256.2" x2="907.21" y2="309.3" stroke="#78879a" stroke-width="0.8" stroke-dasharray="2.4 1.6"/>
<line x1="932.94" y1="256.2" x2="932.94" y2="309.3" stroke="#78879a" stroke-width="0.8" stroke-dasharray="2.4 1.6"/>
<line x1="958.67" y1="256.2" x2="958.67" y2="309.3" stroke="#78879a" stroke-width="0.8" stroke-dasharray="2.4 1.6"/>
<line x1="984.4" y1="256.2" x2="984.4" y2="309.3" stroke="#78879a" stroke-width="0.8" stroke-dasharray="2.4 1.6"/>
<line x1="1010.13" y1="256.2" x2="1010.13" y2="309.3" stroke="#78879a" stroke-width="0.8" stroke-dasharray="2.4 1.6"/>
<line x1="1035.86" y1="256.2" x2="1035.86" y2="309.3" stroke="#78879a" stroke-width="0.8" stroke-dasharray="2.4 1.6"/>
<line x1="1061.59" y1="256.2" x2="1061.59" y2="309.3" stroke="#78879a" stroke-width="0.8" stroke-dasharray="2.4 1.6"/>
<line x1="1087.32" y1="256.2" x2="1087.32" y2="309.3" stroke="#78879a" stroke-width="0.8" stroke-dasharray="2.4 1.6"/>
<line x1="1113.05" y1="256.2" x2="1113.05" y2="309.3" stroke="#78879a" stroke-width="0.8" stroke-dasharray="2.4 1.6"/>
<line x1="1138.78" y1="256.2" x2="1138.78" y2="309.3" stroke="#78879a" stroke-width="0.8" stroke-dasharray="2.4 1.6"/>
<line x1="1164.51" y1="256.2" x2="1164.51" y2="309.3" stroke="#78879a" stroke-width="0.8" stroke-dasharray="2.4 1.6"/>
<line x1="1190.24" y1="256.2" x2="1190.24" y2="309.3" stroke="#78879a" stroke-width="0.8" stroke-dasharray="2.4 1.6"/>
<line x1="1215.97" y1="256.2" x2="1215.97" y2="309.3" stroke="#78879a" stroke-width="0.8" stroke-dasharray="2.4 1.6"/>
<line x1="1241.7" y1="256.2" x2="1241.7" y2="309.3" stroke="#78879a" stroke-width="0.8" stroke-dasharray="2.4 1.6"/>
<line x1="212.5" y1="311.5" x2="212.5" y2="364.3" stroke="#78879a" stroke-width="0.8" stroke-dasharray="2.4 1.6"/>
<line x1="238.23" y1="311.5" x2="238.23" y2="364.3" stroke="#78879a" stroke-width="0.8" stroke-dasharray="2.4 1.6"/>
<line x1="263.96" y1="311.5" x2="263.96" y2="364.3" stroke="#78879a" stroke-width="0.8" stroke-dasharray="2.4 1.6"/>
<line x1="289.69" y1="311.5" x2="289.69" y2="364.3" stroke="#78879a" stroke-width="0.8" stroke-dasharray="2.4 1.6"/>
<line x1="315.42" y1="311.5" x2="315.42" y2="364.3" stroke="#78879a" stroke-width="0.8" stroke-dasharray="2.4 1.6"/>
<line x1="341.15" y1="311.5" x2="341.15" y2="364.3" stroke="#78879a" stroke-width="0.8" stroke-dasharray="2.4 1.6"/>
<line x1="366.88" y1="311.5" x2="366.88" y2="364.3" stroke="#78879a" stroke-width="0.8" stroke-dasharray="2.4 1.6"/>
<line x1="392.61" y1="311.5" x2="392.61" y2="364.3" stroke="#78879a" stroke-width="0.8" stroke-dasharray="2.4 1.6"/>
<line x1="418.34" y1="311.5" x2="418.34" y2="364.3" stroke="#78879a" stroke-width="0.8" stroke-dasharray="2.4 1.6"/>
<line x1="444.07" y1="311.5" x2="444.07" y2="364.3" stroke="#78879a" stroke-width="0.8" stroke-dasharray="2.4 1.6"/>
<line x1="469.8" y1="311.5" x2="469.8" y2="364.3" stroke="#78879a" stroke-width="0.8" stroke-dasharray="2.4 1.6"/>
<line x1="495.53" y1="311.5" x2="495.53" y2="364.3" stroke="#78879a" stroke-width="0.8" stroke-dasharray="2.4 1.6"/>
<line x1="521.26" y1="311.5" x2="521.26" y2="364.3" stroke="#78879a" stroke-width="0.8" stroke-dasharray="2.4 1.6"/>
<line x1="546.99" y1="311.5" x2="546.99" y2="364.3" stroke="#78879a" stroke-width="0.8" stroke-dasharray="2.4 1.6"/>
<line x1="572.72" y1="311.5" x2="572.72" y2="364.3" stroke="#78879a" stroke-width="0.8" stroke-dasharray="2.4 1.6"/>
<line x1="598.45" y1="311.5" x2="598.45" y2="364.3" stroke="#78879a" stroke-width="0.8" stroke-dasharray="2.4 1.6"/>
<line x1="624.18" y1="311.5" x2="624.18" y2="364.3" stroke="#78879a" stroke-width="0.8" stroke-dasharray="2.4 1.6"/>
<line x1="649.91" y1="311.5" x2="649.91" y2="364.3" stroke="#78879a" stroke-width="0.8" stroke-dasharray="2.4 1.6"/>
<line x1="675.64" y1="311.5" x2="675.64" y2="364.3" stroke="#78879a" stroke-width="0.8" stroke-dasharray="2.4 1.6"/>
<line x1="701.37" y1="311.5" x2="701.37" y2="364.3" stroke="#78879a" stroke-width="0.8" stroke-dasharray="2.4 1.6"/>
<line x1="727.1" y1="311.5" x2="727.1" y2="364.3" stroke="#78879a" stroke-width="0.8" stroke-dasharray="2.4 1.6"/>
<line x1="752.83" y1="311.5" x2="752.83" y2="364.3" stroke="#78879a" stroke-width="0.8" stroke-dasharray="2.4 1.6"/>
<line x1="778.56" y1="311.5" x2="778.56" y2="364.3" stroke="#78879a" stroke-width="0.8" stroke-dasharray="2.4 1.6"/>
<line x1="804.29" y1="311.5" x2="804.29" y2="364.3" stroke="#78879a" stroke-width="0.8" stroke-dasharray="2.4 1.6"/>
<line x1="830.02" y1="311.5" x2="830.02" y2="364.3" stroke="#78879a" stroke-width="0.8" stroke-dasharray="2.4 1.6"/>
<line x1="855.75" y1="311.5" x2="855.75" y2="364.3" stroke="#78879a" stroke-width="0.8" stroke-dasharray="2.4 1.6"/>
<line x1="881.48" y1="311.5" x2="881.48" y2="364.3" stroke="#78879a" stroke-width="0.8" stroke-dasharray="2.4 1.6"/>
<line x1="907.21" y1="311.5" x2="907.21" y2="364.3" stroke="#78879a" stroke-width="0.8" stroke-dasharray="2.4 1.6"/>
<line x1="932.94" y1="311.5" x2="932.94" y2="364.3" stroke="#78879a" stroke-width="0.8" stroke-dasharray="2.4 1.6"/>
<line x1="958.67" y1="311.5" x2="958.67" y2="364.3" stroke="#78879a" stroke-width="0.8" stroke-dasharray="2.4 1.6"/>
<line x1="984.4" y1="311.5" x2="984.4" y2="364.3" stroke="#78879a" stroke-width="0.8" stroke-dasharray="2.4 1.6"/>
<line x1="1010.13" y1="311.5" x2="1010.13" y2="364.3" stroke="#78879a" stroke-width="0.8" stroke-dasharray="2.4 1.6"/>
<line x1="1035.86" y1="311.5" x2="1035.86" y2="364.3" stroke="#78879a" stroke-width="0.8" stroke-dasharray="2.4 1.6"/>
<line x1="1061.59" y1="311.5" x2="1061.59" y2="364.3" stroke="#78879a" stroke-width="0.8" stroke-dasharray="2.4 1.6"/>
<line x1="1087.32" y1="311.5" x2="1087.32" y2="364.3" stroke="#78879a" stroke-width="0.8" stroke-dasharray="2.4 1.6"/>
<line x1="1113.05" y1="311.5" x2="1113.05" y2="364.3" stroke="#78879a" stroke-width="0.8" stroke-dasharray="2.4 1.6"/>
<line x1="1138.78" y1="311.5" x2="1138.78" y2="364.3" stroke="#78879a" stroke-width="0.8" stroke-dasharray="2.4 1.6"/>
<line x1="1164.51" y1="311.5" x2="1164.51" y2="364.3" stroke="#78879a" stroke-width="0.8" stroke-dasharray="2.4 1.6"/>
<line x1="1190.24" y1="311.5" x2="1190.24" y2="364.3" stroke="#78879a" stroke-width="0.8" stroke-dasharray="2.4 1.6"/>
<line x1="1215.97" y1="311.5" x2="1215.97" y2="364.3" stroke="#78879a" stroke-width="0.8" stroke-dasharray="2.4 1.6"/>
<line x1="1241.7" y1="311.5" x2="1241.7" y2="364.3" stroke="#78879a" stroke-width="0.8" stroke-dasharray="2.4 1.6"/>
<line x1="212.5" y1="366.5" x2="212.5" y2="416" stroke="#78879a" stroke-width="0.8" stroke-dasharray="2.4 1.6"/>
<line x1="238.23" y1="366.5" x2="238.23" y2="416" stroke="#78879a" stroke-width="0.8" stroke-dasharray="2.4 1.6"/>
<line x1="263.96" y1="366.5" x2="263.96" y2="416" stroke="#78879a" stroke-width="0.8" stroke-dasharray="2.4 1.6"/>
<line x1="289.69" y1="366.5" x2="289.69" y2="416" stroke="#78879a" stroke-width="0.8" stroke-dasharray="2.4 1.6"/>
<line x1="315.42" y1="366.5" x2="315.42" y2="416" stroke="#78879a" stroke-width="0.8" stroke-dasharray="2.4 1.6"/>
<line x1="341.15" y1="366.5" x2="341.15" y2="416" stroke="#78879a" stroke-width="0.8" stroke-dasharray="2.4 1.6"/>
<line x1="366.88" y1="366.5" x2="366.88" y2="416" stroke="#78879a" stroke-width="0.8" stroke-dasharray="2.4 1.6"/>
<line x1="392.61" y1="366.5" x2="392.61" y2="416" stroke="#78879a" stroke-width="0.8" stroke-dasharray="2.4 1.6"/>
<line x1="418.34" y1="366.5" x2="418.34" y2="416" stroke="#78879a" stroke-width="0.8" stroke-dasharray="2.4 1.6"/>
<line x1="444.07" y1="366.5" x2="444.07" y2="416" stroke="#78879a" stroke-width="0.8" stroke-dasharray="2.4 1.6"/>
<line x1="469.8" y1="366.5" x2="469.8" y2="416" stroke="#78879a" stroke-width="0.8" stroke-dasharray="2.4 1.6"/>
<line x1="495.53" y1="366.5" x2="495.53" y2="416" stroke="#78879a" stroke-width="0.8" stroke-dasharray="2.4 1.6"/>
<line x1="521.26" y1="366.5" x2="521.26" y2="416" stroke="#78879a" stroke-width="0.8" stroke-dasharray="2.4 1.6"/>
<line x1="546.99" y1="366.5" x2="546.99" y2="416" stroke="#78879a" stroke-width="0.8" stroke-dasharray="2.4 1.6"/>
<line x1="572.72" y1="366.5" x2="572.72" y2="416" stroke="#78879a" stroke-width="0.8" stroke-dasharray="2.4 1.6"/>
<line x1="598.45" y1="366.5" x2="598.45" y2="416" stroke="#78879a" stroke-width="0.8" stroke-dasharray="2.4 1.6"/>
<line x1="624.18" y1="366.5" x2="624.18" y2="416" stroke="#78879a" stroke-width="0.8" stroke-dasharray="2.4 1.6"/>
<line x1="649.91" y1="366.5" x2="649.91" y2="416" stroke="#78879a" stroke-width="0.8" stroke-dasharray="2.4 1.6"/>
<line x1="675.64" y1="366.5" x2="675.64" y2="416" stroke="#78879a" stroke-width="0.8" stroke-dasharray="2.4 1.6"/>
<line x1="701.37" y1="366.5" x2="701.37" y2="416" stroke="#78879a" stroke-width="0.8" stroke-dasharray="2.4 1.6"/>
<line x1="727.1" y1="366.5" x2="727.1" y2="416" stroke="#78879a" stroke-width="0.8" stroke-dasharray="2.4 1.6"/>
<line x1="752.83" y1="366.5" x2="752.83" y2="416" stroke="#78879a" stroke-width="0.8" stroke-dasharray="2.4 1.6"/>
<line x1="778.56" y1="366.5" x2="778.56" y2="416" stroke="#78879a" stroke-width="0.8" stroke-dasharray="2.4 1.6"/>
<line x1="804.29" y1="366.5" x2="804.29" y2="416" stroke="#78879a" stroke-width="0.8" stroke-dasharray="2.4 1.6"/>
<line x1="830.02" y1="366.5" x2="830.02" y2="416" stroke="#78879a" stroke-width="0.8" stroke-dasharray="2.4 1.6"/>
<line x1="855.75" y1="366.5" x2="855.75" y2="416" stroke="#78879a" stroke-width="0.8" stroke-dasharray="2.4 1.6"/>
<line x1="881.48" y1="366.5" x2="881.48" y2="416" stroke="#78879a" stroke-width="0.8" stroke-dasharray="2.4 1.6"/>
<line x1="907.21" y1="366.5" x2="907.21" y2="416" stroke="#78879a" stroke-width="0.8" stroke-dasharray="2.4 1.6"/>
<line x1="932.94" y1="366.5" x2="932.94" y2="416" stroke="#78879a" stroke-width="0.8" stroke-dasharray="2.4 1.6"/>
<line x1="958.67" y1="366.5" x2="958.67" y2="416" stroke="#78879a" stroke-width="0.8" stroke-dasharray="2.4 1.6"/>
<line x1="984.4" y1="366.5" x2="984.4" y2="416" stroke="#78879a" stroke-width="0.8" stroke-dasharray="2.4 1.6"/>
<line x1="1010.13" y1="366.5" x2="1010.13" y2="416" stroke="#78879a" stroke-width="0.8" stroke-dasharray="2.4 1.6"/>
<line x1="1035.86" y1="366.5" x2="1035.86" y2="416" stroke="#78879a" stroke-width="0.8" stroke-dasharray="2.4 1.6"/>
<line x1="1061.59" y1="366.5" x2="1061.59" y2="416" stroke="#78879a" stroke-width="0.8" stroke-dasharray="2.4 1.6"/>
<line x1="1087.32" y1="366.5" x2="1087.32" y2="416" stroke="#78879a" stroke-width="0.8" stroke-dasharray="2.4 1.6"/>
<line x1="1113.05" y1="366.5" x2="1113.05" y2="416" stroke="#78879a" stroke-width="0.8" stroke-dasharray="2.4 1.6"/>
<line x1="1138.78" y1="366.5" x2="1138.78" y2="416" stroke="#78879a" stroke-width="0.8" stroke-dasharray="2.4 1.6"/>
<line x1="1164.51" y1="366.5" x2="1164.51" y2="416" stroke="#78879a" stroke-width="0.8" stroke-dasharray="2.4 1.6"/>
<line x1="1190.24" y1="366.5" x2="1190.24" y2="416" stroke="#78879a" stroke-width="0.8" stroke-dasharray="2.4 1.6"/>
<line x1="1215.97" y1="366.5" x2="1215.97" y2="416" stroke="#78879a" stroke-width="0.8" stroke-dasharray="2.4 1.6"/>
<line x1="1241.7" y1="366.5" x2="1241.7" y2="416" stroke="#78879a" stroke-width="0.8" stroke-dasharray="2.4 1.6"/>
<line x1="186.4" y1="117.3" x2="1248.6" y2="117.3" stroke="#78879a" stroke-width="0.8" stroke-dasharray="2.4 1.6"/>
<line x1="186.4" y1="143.5" x2="1248.6" y2="143.5" stroke="#78879a" stroke-width="0.8" stroke-dasharray="2.4 1.6"/>
<line x1="186.4" y1="170.3" x2="1248.6" y2="170.3" stroke="#78879a" stroke-width="0.8" stroke-dasharray="2.4 1.6"/>
<line x1="186.4" y1="196.6" x2="1248.6" y2="196.6" stroke="#78879a" stroke-width="0.8" stroke-dasharray="2.4 1.6"/>
<line x1="186.4" y1="252.1" x2="1248.6" y2="252.1" stroke="#78879a" stroke-width="0.8" stroke-dasharray="2.4 1.6"/>
<line x1="186.4" y1="307.6" x2="1248.6" y2="307.6" stroke="#78879a" stroke-width="0.8" stroke-dasharray="2.4 1.6"/>
<line x1="186.4" y1="362.9" x2="1248.6" y2="362.9" stroke="#78879a" stroke-width="0.8" stroke-dasharray="2.4 1.6"/>
<line x1="186.4" y1="415.3" x2="1248.6" y2="415.3" stroke="#78879a" stroke-width="0.8" stroke-dasharray="2.4 1.6"/>
<line x1="186.4" y1="166.5" x2="1248.6" y2="166.5" stroke="#8c98a6" stroke-width="0.8"/>
<path d="M186.9 103.12V108.75M186.9 105.62h-2.1M186.9 105.62h2.1M193.33 100V108.75M193.33 105.62h-2.1M193.33 101.88h2.1M199.77 98.75V101.88M199.77 101.88h-2.1M199.77 100h2.1M206.2 98.75V101.88M206.2 100h-2.1M206.2 101.25h2.1M212.63 99.38V103.75M212.63 101.25h-2.1M212.63 102.5h2.1M219.06 100V106.25M219.06 102.5h-2.1M219.06 104.75h2.1M225.5 101.88V119M225.5 104.75h-2.1M225.5 117.25h2.1M231.93 106V127.5M231.93 117.25h-2.1M231.93 126.25h2.1M238.36 123.12V140M238.36 126.25h-2.1M238.36 132.5h2.1M244.79 129.38V136.88M244.79 130h-2.1M244.79 131.25h2.1M251.23 130.62V138.75M251.23 131.25h-2.1M251.23 132.5h2.1M257.66 123.75V136.25M257.66 132.5h-2.1M257.66 126.25h2.1M264.09 119.38V127.5M264.09 126.25h-2.1M264.09 120h2.1M270.52 111.88V122.5M270.52 120h-2.1M270.52 116.88h2.1M276.96 104V116.88M276.96 116.88h-2.1M276.96 105h2.1M283.39 102.12V111.88M283.39 105h-2.1M283.39 108.75h2.1M289.82 105.62V111.88M289.82 108.75h-2.1M289.82 106.88h2.1M296.25 104.75V108.75M296.25 106.88h-2.1M296.25 107.5h2.1M302.69 105V108.75M302.69 107.5h-2.1M302.69 106.25h2.1M309.12 104.38V108.75M309.12 106.25h-2.1M309.12 106.88h2.1M315.55 105V110.62M315.55 106.88h-2.1M315.55 108.12h2.1M321.98 106.25V109.38M321.98 108.12h-2.1M321.98 108.75h2.1M328.42 105V110M328.42 108.75h-2.1M328.42 108.75h2.1M334.85 105V110M334.85 108.75h-2.1M334.85 108.5h2.1M341.28 106.88V111.88M341.28 108.5h-2.1M341.28 108.75h2.1M347.71 108.75V115.62M347.71 108.75h-2.1M347.71 115.62h2.1M354.14 109.75V114.75M354.14 114.38h-2.1M354.14 112.5h2.1M360.58 109.38V114M360.58 111.5h-2.1M360.58 111.5h2.1M367.01 109.75V116.88M367.01 111.25h-2.1M367.01 113.75h2.1M373.44 112.88V120.88M373.44 113.75h-2.1M373.44 117.5h2.1M379.88 117.5V122.75M379.88 117.5h-2.1M379.88 120.62h2.1M386.31 119.38V129.75M386.31 120.38h-2.1M386.31 125.62h2.1M392.74 122.5V131.88M392.74 125.62h-2.1M392.74 131.5h2.1M399.17 128.12V134.38M399.17 131.25h-2.1M399.17 131.25h2.1M405.61 125.38V133.75M405.61 130.62h-2.1M405.61 126.25h2.1M412.04 126.25V137.5M412.04 126.25h-2.1M412.04 133.5h2.1M418.47 130V140.62M418.47 133.5h-2.1M418.47 131.25h2.1M424.9 129V134.75M424.9 130.62h-2.1M424.9 134.38h2.1M431.34 130.62V137.5M431.34 134h-2.1M431.34 134h2.1M437.77 123.38V133.5M437.77 132.5h-2.1M437.77 127.5h2.1M444.2 123.12V130M444.2 127.5h-2.1M444.2 129h2.1M450.63 124.38V131.25M450.63 129h-2.1M450.63 130.62h2.1M457.07 130V136.25M457.07 130.62h-2.1M457.07 135.25h2.1M463.5 134.38V141.5M463.5 135.25h-2.1M463.5 139.38h2.1M469.93 135V140.62M469.93 139.38h-2.1M469.93 137.5h2.1M476.36 135.25V137.75M476.36 136.5h-2.1M476.36 135.62h2.1M482.79 134V136M482.79 135.62h-2.1M482.79 134.75h2.1M489.23 134.38V138.5M489.23 134.75h-2.1M489.23 138.12h2.1M495.66 137.5V142.5M495.66 138.12h-2.1M495.66 141.5h2.1M502.09 141.25V152.5M502.09 141.5h-2.1M502.09 151.88h2.1M508.52 151.25V156.88M508.52 151.25h-2.1M508.52 153.75h2.1M514.96 152.5V156.25M514.96 153.75h-2.1M514.96 153.5h2.1M521.39 151.88V158.12M521.39 153.5h-2.1M521.39 155.62h2.1M527.82 155V159.75M527.82 155.62h-2.1M527.82 156.88h2.1M534.25 154.38V162.25M534.25 156.88h-2.1M534.25 157.25h2.1M540.69 147.12V159.75M540.69 157.5h-2.1M540.69 149.38h2.1M547.12 146.5V160.62M547.12 149.38h-2.1M547.12 158.12h2.1M553.55 154.38V163.12M553.55 158.12h-2.1M553.55 159.38h2.1M559.99 146.5V161.5M559.99 159.38h-2.1M559.99 148.5h2.1M566.42 147.12V152.75M566.42 148.5h-2.1M566.42 151.25h2.1M572.85 145.62V154.38M572.85 151.25h-2.1M572.85 148.5h2.1M579.28 141.88V151.88M579.28 148.5h-2.1M579.28 149h2.1M585.72 146.5V154.75M585.72 149h-2.1M585.72 154.12h2.1M592.15 153.75V164.75M592.15 154.12h-2.1M592.15 162.5h2.1M598.58 161.88V168.75M598.58 162.5h-2.1M598.58 162.75h2.1M605.01 161.25V164.75M605.01 162.75h-2.1M605.01 163.12h2.1M611.45 153.75V166.25M611.45 162.5h-2.1M611.45 155.25h2.1M617.88 150.25V155.25M617.88 154.75h-2.1M617.88 150.62h2.1M624.31 148.5V152.25M624.31 150.62h-2.1M624.31 151.25h2.1M630.74 150.25V153.75M630.74 151.25h-2.1M630.74 151.5h2.1M637.18 147.5V151.88M637.18 150.62h-2.1M637.18 148.75h2.1M643.61 147.12V151.25M643.61 147.5h-2.1M643.61 150.62h2.1M650.04 144V151.25M650.04 150.62h-2.1M650.04 146.25h2.1M656.47 141.88V147.5M656.47 146.25h-2.1M656.47 145.62h2.1M662.9 141.25V146.25M662.9 143.75h-2.1M662.9 143.12h2.1M669.34 140.62V145M669.34 143.12h-2.1M669.34 142.75h2.1M675.77 140.62V144.38M675.77 142.75h-2.1M675.77 142.5h2.1M682.2 140V146.25M682.2 142.5h-2.1M682.2 145.62h2.1M688.63 145.25V160M688.63 145.62h-2.1M688.63 157.5h2.1M695.07 153.12V162.5M695.07 157.5h-2.1M695.07 159.38h2.1M701.5 157.75V165M701.5 159.38h-2.1M701.5 158.75h2.1M707.93 151.25V160.62M707.93 159.38h-2.1M707.93 152.5h2.1M714.37 151.25V159.38M714.37 152.5h-2.1M714.37 156.5h2.1M720.8 153.75V161.88M720.8 156.5h-2.1M720.8 159.38h2.1M727.23 156.88V164.75M727.23 159.38h-2.1M727.23 158.12h2.1M733.66 153.12V170.62M733.66 158.12h-2.1M733.66 164.38h2.1M740.1 164V178.75M740.1 164.38h-2.1M740.1 175.25h2.1M746.53 174.75V194M746.53 175.25h-2.1M746.53 187.75h2.1M752.96 185V191.25M752.96 187.75h-2.1M752.96 187.5h2.1M759.39 182.5V190.62M759.39 187.5h-2.1M759.39 187.5h2.1M765.82 186V196M765.82 186.88h-2.1M765.82 195h2.1M772.26 186V194.75M772.26 194.38h-2.1M772.26 186.88h2.1M778.69 182.25V188.5M778.69 186.88h-2.1M778.69 184.75h2.1M785.12 183.75V186.88M785.12 185h-2.1M785.12 184.75h2.1M791.55 182.5V186.88M791.55 183.75h-2.1M791.55 183.75h2.1M797.99 183.12V188.75M797.99 184.38h-2.1M797.99 184.38h2.1M804.42 181V187.25M804.42 183.75h-2.1M804.42 183.12h2.1M810.85 180V186M810.85 181.88h-2.1M810.85 185.25h2.1M817.28 179.38V186M817.28 185.25h-2.1M817.28 181.5h2.1M823.72 179.38V183.75M823.72 181.5h-2.1M823.72 181.5h2.1M830.15 178.12V183.75M830.15 179.38h-2.1M830.15 179.75h2.1M836.58 177.25V181.88M836.58 179.75h-2.1M836.58 181.25h2.1M843.01 178.5V186.5M843.01 181.25h-2.1M843.01 181.5h2.1M849.45 176.25V184.75M849.45 181.5h-2.1M849.45 177.75h2.1M855.88 170.62V179.38M855.88 177.75h-2.1M855.88 176.88h2.1M862.31 176V182.75M862.31 176.5h-2.1M862.31 178.5h2.1M868.75 174V181.5M868.75 178.5h-2.1M868.75 180.62h2.1M875.18 178.5V186.88M875.18 180.62h-2.1M875.18 186h2.1M881.61 177.75V188.12M881.61 186h-2.1M881.61 180.62h2.1M888.04 179.38V185.62M888.04 180.62h-2.1M888.04 182.25h2.1M894.48 174.75V184.75M894.48 182.25h-2.1M894.48 177.5h2.1M900.91 150V178.12M900.91 177.5h-2.1M900.91 158.75h2.1M907.34 152.5V164.38M907.34 158.75h-2.1M907.34 163.12h2.1M913.77 160V167.75M913.77 163.12h-2.1M913.77 165.25h2.1M920.21 158.75V166M920.21 165.25h-2.1M920.21 161h2.1M926.64 157.75V164M926.64 161h-2.1M926.64 159h2.1M933.07 149.75V164.38M933.07 159h-2.1M933.07 154.38h2.1M939.5 158.5V165.62M939.5 161.25h-2.1M939.5 164.38h2.1M945.93 160.62V170.62M945.93 164.38h-2.1M945.93 161.5h2.1M952.37 160V165.62M952.37 161.5h-2.1M952.37 165.25h2.1M958.8 157.25V166M958.8 165.25h-2.1M958.8 157.5h2.1M965.23 154.75V160.62M965.23 157.5h-2.1M965.23 156.88h2.1M971.66 151V157.75M971.66 155.62h-2.1M971.66 155.62h2.1M978.1 153.75V157.5M978.1 155.62h-2.1M978.1 154.75h2.1M984.53 152.5V156.88M984.53 154.75h-2.1M984.53 154.75h2.1M990.96 153.12V159M990.96 154.75h-2.1M990.96 158.12h2.1M997.39 149.75V160M997.39 158.12h-2.1M997.39 158.5h2.1M1003.83 157.25V166.88M1003.83 158.5h-2.1M1003.83 166.25h2.1M1010.26 162.5V175.62M1010.26 166.25h-2.1M1010.26 173.75h2.1M1016.69 166.5V174.38M1016.69 173.75h-2.1M1016.69 168.12h2.1M1023.12 167.5V175.62M1023.12 168.12h-2.1M1023.12 174.38h2.1M1029.56 168.12V183.75M1029.56 174.38h-2.1M1029.56 182.5h2.1M1035.99 177.5V186.88M1035.99 182.5h-2.1M1035.99 182.25h2.1M1042.42 177.25V184.75M1042.42 182.25h-2.1M1042.42 178.75h2.1M1048.86 178.5V187.5M1048.86 178.75h-2.1M1048.86 186.5h2.1M1055.29 178.75V187.25M1055.29 186.5h-2.1M1055.29 179h2.1M1061.72 176.25V182.75M1061.72 179h-2.1M1061.72 179.38h2.1M1068.15 177.25V181.88M1068.15 179.38h-2.1M1068.15 179h2.1M1074.59 177.25V183.75M1074.59 179h-2.1M1074.59 182.25h2.1M1081.02 179.75V183.75M1081.02 182.25h-2.1M1081.02 182.75h2.1M1087.45 181V184M1087.45 183.5h-2.1M1087.45 181.5h2.1M1093.88 180.25V182.5M1093.88 181.5h-2.1M1093.88 181h2.1M1100.32 179.38V183.5M1100.32 181.5h-2.1M1100.32 181.88h2.1M1106.75 181.25V184.75M1106.75 182.5h-2.1M1106.75 183.12h2.1M1113.18 182.25V189.38M1113.18 183.5h-2.1M1113.18 186.25h2.1M1119.61 179.38V186.5M1119.61 186.25h-2.1M1119.61 181.5h2.1M1126.05 178.12V181.88M1126.05 181.5h-2.1M1126.05 179.38h2.1M1132.48 174.75V181M1132.48 179.38h-2.1M1132.48 176.25h2.1M1138.91 169.38V178.12M1138.91 177.5h-2.1M1138.91 170.25h2.1M1145.34 169.38V175.25M1145.34 170.25h-2.1M1145.34 174.38h2.1M1151.78 171V185.62M1151.78 174.38h-2.1M1151.78 181.5h2.1M1158.21 178.75V196.25M1158.21 181.5h-2.1M1158.21 191.88h2.1M1164.64 186V194.75M1164.64 191.88h-2.1M1164.64 187.25h2.1M1171.07 185.25V191.25M1171.07 187.25h-2.1M1171.07 189h2.1M1177.51 186.88V191.88M1177.51 189h-2.1M1177.51 189.38h2.1M1183.94 187.5V194.38M1183.94 189.38h-2.1M1183.94 191h2.1M1190.37 182.25V193.75M1190.37 191h-2.1M1190.37 188.5h2.1M1196.8 174.75V190M1196.8 189h-2.1M1196.8 179.38h2.1M1203.24 166.88V182.75M1203.24 179.38h-2.1M1203.24 168.12h2.1M1209.67 161V172.75M1209.67 168.12h-2.1M1209.67 161.88h2.1M1216.1 158.12V165.62M1216.1 161.88h-2.1M1216.1 161.5h2.1M1222.53 159V165M1222.53 161.5h-2.1M1222.53 161.5h2.1M1228.97 159.38V164M1228.97 161.5h-2.1M1228.97 161.88h2.1M1235.4 159.38V164M1235.4 161.88h-2.1M1235.4 162.5h2.1M1241.83 161V166.88M1241.83 162.5h-2.1M1241.83 162.25h2.1" stroke="#00f000" stroke-width="0.9" fill="none"/>
<circle cx="236.2" cy="132.1" r="7.4" fill="#a89c8a" fill-opacity="0.95"/>
<circle cx="272.2" cy="116.8" r="7.4" fill="#a89c8a" fill-opacity="0.95"/>
<line x1="238.5" y1="125" x2="238.5" y2="140" stroke="#00f000" stroke-width="1"/>
<line x1="270.7" y1="110" x2="270.7" y2="122" stroke="#00e000" stroke-width="1"/>
<line x1="241" y1="130.5" x2="268" y2="118.8" stroke="#1818ff" stroke-width="1" stroke-dasharray="2.6 2.2"/>
<line x1="235.8" y1="117.3" x2="241.2" y2="117.3" stroke="#1414d0" stroke-width="1"/>
<line x1="235.8" y1="158.8" x2="241.2" y2="158.8" stroke="#b01010" stroke-width="1"/>
<path d="M233.4 132.1 l3.2 -3 v1.9 h3.8 v2.2 h-3.8 v1.9 z" fill="#1a1aff" stroke="#fff" stroke-width="0.7"/>
<path d="M269.3 116.8 l4.6 -3.4 v6.8 z" fill="#f5a623" stroke="#fff" stroke-width="0.7"/>
<polyline points="186.9,226.81 193.33,220.88 199.77,218.53 206.2,220.56 212.63,223.69 219.06,225.25 225.5,243.53 231.93,252.12 238.36,243.53 244.79,244.31 251.23,245.56 257.66,238.84 264.09,231.81 270.52,226.34 276.96,216.97 283.39,222.44 289.82,219.31 296.25,219.78 302.69,219.31 309.12,219.78 315.55,219.78 321.98,220.56 328.42,220.56 334.85,220.56 341.28,220.88 347.71,227.91 354.14,224.78 360.58,223.69 367.01,226.34 373.44,230.25 379.88,233.38 386.31,237.75 392.74,244.31 399.17,244.31 405.61,240.09 412.04,246.66 418.47,244.31 424.9,247.44 431.34,245.56 437.77,239.62 444.2,240.41 450.63,241.97 457.07,247.75 463.5,250.56 469.93,245.88 476.36,244.62 482.79,244.31 489.23,247.75 495.66,251.34 502.09,251.81 508.52,249 514.96,248.22 521.39,250.56 527.82,249.31 534.25,247.44 540.69,240.41 547.12,248.22 553.55,249.31 559.99,237.75 566.42,241.5 572.85,238.38 579.28,239.31 585.72,243.53 592.15,250.25 598.58,249 605.01,248.22 611.45,241.19 617.88,236.5 624.31,237.59 630.74,237.28 637.18,234.47 643.61,236.19 650.04,231.03 656.47,229 662.9,227.44 669.34,227.44 675.77,224.31 682.2,227.91 688.63,240.41 695.07,243.53 701.5,241.19 707.93,233.06 714.37,237.59 720.8,242.44 727.23,240.41 733.66,244.62 740.1,249.31 746.53,247.44 752.96,247.12 759.39,245.41 765.82,249.47 772.26,243.53 778.69,241.5 785.12,240.88 791.55,240.72 797.99,239.94 804.42,238.38 810.85,240.88 817.28,236.5 823.72,235.41 830.15,234.62 836.58,236.81 843.01,235.72 849.45,232.12 855.88,232.12 862.31,234.62 868.75,236.19 875.18,241.5 881.61,235.41 888.04,236.5 894.48,231.03 900.91,213.06 907.34,216.19 913.77,219.31 920.21,215.41 926.64,212.75 933.07,208.38 939.5,219.31 945.93,215.41 952.37,219.31 958.8,211.5 965.23,208.69 971.66,209.62 978.1,208.69 984.53,208.69 990.96,207.59 997.39,204 1003.83,213.84 1010.26,222.75 1016.69,217.75 1023.12,225.56 1029.56,234.62 1035.99,234.62 1042.42,230.56 1048.86,239.31 1055.29,231.81 1061.72,230.56 1068.15,231.81 1074.59,237.28 1081.02,244.62 1087.45,241.5 1093.88,240.88 1100.32,243.53 1106.75,245.41 1113.18,247.44 1119.61,240.41 1126.05,236.81 1132.48,233.69 1138.91,224.78 1145.34,230.25 1151.78,239.94 1158.21,247.12 1164.64,240.88 1171.07,244 1177.51,244.78 1183.94,245.56 1190.37,242.75 1196.8,231.03 1203.24,217.75 1209.67,208.38 1216.1,207.12 1222.53,207.12 1228.97,210.25 1235.4,209.62 1241.83,208.38" fill="none" stroke="#e00000" stroke-width="0.9" stroke-linejoin="round"/>
<polyline points="186.9,299 193.33,291.19 199.77,283.38 206.2,286.19 212.63,289.31 219.06,293.53 225.5,304 231.93,307.59 238.36,297.75 244.79,298.22 251.23,300.56 257.66,292.44 264.09,284.16 270.52,277.91 276.96,267.44 283.39,272.12 289.82,267.75 296.25,266.5 302.69,265.09 309.12,266.5 315.55,265.88 321.98,267.28 328.42,267.44 334.85,270.09 341.28,275.25 347.71,304.47 354.14,297.75 360.58,291.5 367.01,297.75 373.44,300.25 379.88,301.34 386.31,301.34 392.74,306.81 399.17,301.81 405.61,295.88 412.04,300.25 418.47,296.66 424.9,302.12 431.34,299.31 437.77,289.62 444.2,289.62 450.63,290.41 457.07,301.81 463.5,303.69 469.93,295.56 476.36,292.75 482.79,290.41 489.23,299.78 495.66,305.72 502.09,306.81 508.52,302.44 514.96,302.44 521.39,305.72 527.82,302.91 534.25,299.78 540.69,286.5 547.12,300.56 553.55,302.91 559.99,281.81 566.42,286.5 572.85,276.34 579.28,275.56 585.72,284.62 592.15,302.91 598.58,300.25 605.01,298.22 611.45,286.5 617.88,276.34 624.31,277.59 630.74,277.91 637.18,270.88 643.61,275.56 650.04,267.28 656.47,264.62 662.9,262.28 669.34,261.5 675.77,260.72 682.2,268.53 688.63,301.34 695.07,302.12 701.5,297.44 707.93,283.69 714.37,291.19 720.8,297.75 727.23,294.31 733.66,298.22 740.1,304.47 746.53,301.81 752.96,302.44 759.39,301.34 765.82,305.25 772.26,297.75 778.69,295.56 785.12,294.31 791.55,294 797.99,293.53 804.42,292.44 810.85,290.41 817.28,275.56 823.72,261.19 830.15,260.41 836.58,269.62 843.01,270.56 849.45,263.38 855.88,275.25 862.31,281.81 868.75,285.72 875.18,306.81 881.61,286.81 888.04,291.19 894.48,276.34 900.91,271.66 907.34,275.25 913.77,278.38 920.21,273.69 926.64,271.19 933.07,265.09 939.5,278.69 945.93,274 952.37,278.69 958.8,269.62 965.23,266.5 971.66,269 978.1,269.62 984.53,270.88 990.96,277.12 997.39,278.69 1003.83,295.88 1010.26,303.38 1016.69,294.62 1023.12,305.25 1029.56,305.25 1035.99,302.12 1042.42,297.75 1048.86,305.25 1055.29,296.19 1061.72,295.56 1068.15,297.12 1074.59,297.75 1081.02,298.22 1087.45,293.06 1093.88,289.62 1100.32,293.53 1106.75,289.31 1113.18,295.09 1119.61,276.34 1126.05,269.31 1132.48,264.62 1138.91,260.25 1145.34,270.88 1151.78,288.84 1158.21,301.34 1164.64,291.97 1171.07,295.56 1177.51,297.12 1183.94,298.22 1190.37,294.31 1196.8,277.91 1203.24,261.5 1209.67,259.16 1216.1,262.28 1222.53,262.28 1228.97,265.41 1235.4,265.88 1241.83,264.94" fill="none" stroke="#e00000" stroke-width="0.9" stroke-linejoin="round"/>
<polyline points="186.9,350.41 193.33,340.25 199.77,322.28 206.2,327.75 212.63,335.56 219.06,347.28 225.5,358.69 231.93,362.12 238.36,352.75 244.79,353.53 251.23,355.09 257.66,346.5 264.09,333.22 270.52,317.59 276.96,315.25 283.39,323.84 289.82,321.5 296.25,325.41 302.69,325.41 309.12,333.22 315.55,340.25 321.98,340.25 328.42,353.53 334.85,354.31 341.28,345.72 347.71,362.91 354.14,348.84 360.58,344.62 367.01,353.53 373.44,354.62 379.88,355.09 386.31,355.09 392.74,362.12 399.17,356.66 405.61,346.5 412.04,351.19 418.47,344.62 424.9,351.19 431.34,342.59 437.77,327.75 444.2,334 450.63,339 457.07,357.44 463.5,358.69 469.93,351.19 476.36,347.75 482.79,345.72 489.23,349.94 495.66,358.22 502.09,361.34 508.52,355.56 514.96,355.56 521.39,359.31 527.82,356.66 534.25,351.19 540.69,320.72 547.12,350.41 553.55,353.06 559.99,319.16 566.42,330.09 572.85,323.06 579.28,330.88 585.72,342.59 592.15,358.69 598.58,355.56 605.01,354.31 611.45,339.47 617.88,324.62 624.31,322.28 630.74,322.28 637.18,316.03 643.61,322.28 650.04,323.38 656.47,326.97 662.9,321.5 669.34,321.19 675.77,319.94 682.2,336.34 688.63,356.19 695.07,357.44 701.5,351.97 707.93,339 714.37,346.19 720.8,350.88 727.23,339.47 733.66,347.28 740.1,358.22 746.53,355.56 752.96,355.56 759.39,354.62 765.82,360.25 772.26,347.75 778.69,335.25 785.12,318.69 791.55,318.38 797.99,317.59 804.42,320.25 810.85,343.06 817.28,324.31 823.72,318.06 830.15,317.59 836.58,337.12 843.01,335.25 849.45,319.94 855.88,333.22 862.31,340.25 868.75,345.72 875.18,361.34 881.61,342.59 888.04,346.5 894.48,323.84 900.91,327.44 907.34,330.88 913.77,333.69 920.21,330.09 926.64,327.75 933.07,322.75 939.5,355.09 945.93,341.81 952.37,349.94 958.8,331.66 965.23,326.5 971.66,325.09 978.1,323.53 984.53,326.97 990.96,337.91 997.39,351.97 1003.83,359 1010.26,359 1016.69,350.41 1023.12,360.25 1029.56,360.25 1035.99,356.66 1042.42,347.28 1048.86,359 1055.29,342.59 1061.72,337.91 1068.15,327.75 1074.59,337.91 1081.02,342.28 1087.45,338.38 1093.88,342.59 1100.32,351.19 1106.75,355.09 1113.18,346.5 1119.61,323.06 1126.05,319.62 1132.48,320.25 1138.91,316.03 1145.34,326.97 1151.78,349.62 1158.21,355.56 1164.64,346.81 1171.07,350.88 1177.51,352.44 1183.94,352.44 1190.37,341.03 1196.8,323.84 1203.24,316.81 1209.67,314.47 1216.1,318.06 1222.53,319.16 1228.97,322.75 1235.4,325.41 1241.83,328.53" fill="none" stroke="#e00000" stroke-width="0.9" stroke-linejoin="round"/>
<polyline points="186.9,388.69 193.33,375.41 199.77,377.75 206.2,383.69 212.63,414 219.06,406.66 225.5,411.34 231.93,415.25 238.36,404.62 244.79,404.62 251.23,396.5 257.66,376.19 264.09,370.72 270.52,371.5 276.96,373.06 283.39,387.91 289.82,385.56 296.25,397.75 302.69,382.44 309.12,407.44 315.55,399.31 321.98,407.44 328.42,403.22 334.85,404.62 341.28,395.25 347.71,415.25 354.14,401.19 360.58,390.25 367.01,401.97 373.44,405.09 379.88,407.44 386.31,405.88 392.74,413.69 399.17,405.88 405.61,388.38 412.04,397.28 418.47,389 424.9,400.41 431.34,391.03 437.77,383.22 444.2,387.91 450.63,401.19 457.07,412.44 463.5,411.34 469.93,398.84 476.36,373.38 482.79,376.5 489.23,413.38 495.66,411.34 502.09,413.69 508.52,406.19 514.96,404.31 521.39,402.44 527.82,397.75 534.25,391.81 540.69,376.19 547.12,403.53 553.55,406.19 559.99,374.62 566.42,384.78 572.85,380.09 579.28,394.16 585.72,409 592.15,412.12 598.58,406.66 605.01,398.06 611.45,374.62 617.88,370.72 624.31,376.97 630.74,391.03 637.18,375.41 643.61,393.38 650.04,383.22 656.47,384.47 662.9,378.53 669.34,381.19 675.77,380.56 682.2,414 688.63,409.31 695.07,410.56 701.5,402.75 707.93,373.84 714.37,387.12 720.8,407.75 727.23,394.62 733.66,399.62 740.1,411.34 746.53,409 752.96,407.12 759.39,399.31 765.82,407.75 772.26,384 778.69,376.5 785.12,375.41 791.55,382.12 797.99,377.75 804.42,380.09 810.85,396.19 817.28,384 823.72,375.41 830.15,373.38 836.58,403.53 843.01,390.25 849.45,375.41 855.88,387.91 862.31,398.06 868.75,409.78 875.18,413.38 881.61,391.03 888.04,389.47 894.48,377.44 900.91,381.66 907.34,386.34 913.77,394.16 920.21,396.5 926.64,376.97 933.07,380.09 939.5,414.94 945.93,395.25 952.37,394.94 958.8,370.72 965.23,372.75 971.66,382.44 978.1,387.91 984.53,399.31 990.96,408.22 997.39,407.44 1003.83,411.81 1010.26,412.12 1016.69,398.84 1023.12,411.34 1029.56,411.34 1035.99,406.66 1042.42,396.81 1048.86,407.12 1055.29,378.53 1061.72,378.53 1068.15,384.78 1074.59,405.56 1081.02,413.38 1087.45,399.94 1093.88,384.78 1100.32,399.31 1106.75,405.09 1113.18,401.97 1119.61,376.97 1126.05,375.41 1132.48,376.5 1138.91,372.28 1145.34,387.12 1151.78,404.62 1158.21,408.69 1164.64,399.31 1171.07,397.75 1177.51,395.25 1183.94,398.84 1190.37,391.81 1196.8,380.88 1203.24,373.38 1209.67,371.19 1216.1,376.19 1222.53,380.09 1228.97,402.75 1235.4,398.38 1241.83,391.03" fill="none" stroke="#e00000" stroke-width="0.9" stroke-linejoin="round"/>
<line x1="186.4" y1="199.5" x2="1249" y2="199.5" stroke="#d6d6d6" stroke-width="1.7"/>
<line x1="186.4" y1="255.2" x2="1249" y2="255.2" stroke="#d6d6d6" stroke-width="1.7"/>
<line x1="186.4" y1="310.5" x2="1249" y2="310.5" stroke="#d6d6d6" stroke-width="1.7"/>
<line x1="186.4" y1="365.5" x2="1249" y2="365.5" stroke="#d6d6d6" stroke-width="1.7"/>
<path d="M186.4 417.2 V90.4 H1248.6 V417.2 Z" fill="none" stroke="#c0c0c0" stroke-width="0.9"/>
<path d="M1030.6 91 h6.4 l-3.2 3.4 z" fill="#8c98a6"/>
<text transform="matrix(1 .0005 0 1 189.8 100.1)" font-size="7.7" fill="#f4f4f4" textLength="162.3" lengthAdjust="spacingAndGlyphs" class="ct">EURUSD,H1  1.15962 1.16012 1.15952 1.15993</text>
<text transform="matrix(1 .0005 0 1 189.8 211)" font-size="7.7" fill="#f4f4f4" textLength="102.3" lengthAdjust="spacingAndGlyphs" class="ct">Stoch(48,1,1) 79.2169 79.2169</text>
<text transform="matrix(1 .0005 0 1 189.8 266.2)" font-size="7.7" fill="#f4f4f4" textLength="102.3" lengthAdjust="spacingAndGlyphs" class="ct">Stoch(12,1,1) 90.2062 90.2062</text>
<text transform="matrix(1 .0005 0 1 189.8 321.5)" font-size="7.7" fill="#f4f4f4" textLength="97.8" lengthAdjust="spacingAndGlyphs" class="ct">Stoch(6,1,1) 81.1881 81.1881</text>
<text transform="matrix(1 .0005 0 1 189.8 376.5)" font-size="7.7" fill="#f4f4f4" textLength="97.8" lengthAdjust="spacingAndGlyphs" class="ct">Stoch(3,1,1) 76.2500 76.2500</text>
<line x1="1248.6" y1="117.4" x2="1251" y2="117.4" stroke="#c0c0c0" stroke-width="0.8"/>
<text transform="matrix(1 .0005 0 1 1252.9 120.2)" font-size="7.7" fill="#f4f4f4" textLength="25.6" lengthAdjust="spacingAndGlyphs" class="ct">1.16930</text>
<line x1="1248.6" y1="143.7" x2="1251" y2="143.7" stroke="#c0c0c0" stroke-width="0.8"/>
<text transform="matrix(1 .0005 0 1 1252.9 146.5)" font-size="7.7" fill="#f4f4f4" textLength="25.6" lengthAdjust="spacingAndGlyphs" class="ct">1.16420</text>
<line x1="1248.6" y1="171.3" x2="1251" y2="171.3" stroke="#c0c0c0" stroke-width="0.8"/>
<text transform="matrix(1 .0005 0 1 1252.9 174.1)" font-size="7.7" fill="#f4f4f4" textLength="25.6" lengthAdjust="spacingAndGlyphs" class="ct">1.15910</text>
<line x1="1248.6" y1="196.4" x2="1251" y2="196.4" stroke="#c0c0c0" stroke-width="0.8"/>
<text transform="matrix(1 .0005 0 1 1252.9 199.2)" font-size="7.7" fill="#f4f4f4" textLength="25.6" lengthAdjust="spacingAndGlyphs" class="ct">1.15415</text>
<rect x="1249.4" y="162.3" width="31" height="7.9" fill="#ffffff"/>
<text transform="matrix(1 .0005 0 1 1252.9 169.4)" font-size="7.7" fill="#000" textLength="25.6" lengthAdjust="spacingAndGlyphs" class="ct">1.15993</text>
<text transform="matrix(1 .0005 0 1 1251.5 209.2)" font-size="7.7" fill="#f4f4f4" textLength="25.6" lengthAdjust="spacingAndGlyphs" class="ct">85.5335</text>
<text transform="matrix(1 .0005 0 1 1255.1 251.4)" font-size="7.7" fill="#f4f4f4" textLength="16.6" lengthAdjust="spacingAndGlyphs" class="ct">3.427</text>
<text transform="matrix(1 .0005 0 1 1251.5 265.1)" font-size="7.7" fill="#f4f4f4" textLength="29.5" lengthAdjust="spacingAndGlyphs" class="ct">103.2055</text>
<text transform="matrix(1 .0005 0 1 1255.1 306.6)" font-size="7.7" fill="#f4f4f4" textLength="20.8" lengthAdjust="spacingAndGlyphs" class="ct">4.1489</text>
<text transform="matrix(1 .0005 0 1 1251.5 319.6)" font-size="7.7" fill="#f4f4f4" textLength="29.5" lengthAdjust="spacingAndGlyphs" class="ct">103.1069</text>
<text transform="matrix(1 .0005 0 1 1255.1 362.3)" font-size="7.7" fill="#f4f4f4" textLength="16.6" lengthAdjust="spacingAndGlyphs" class="ct">4.331</text>
<text transform="matrix(1 .0005 0 1 1251.5 375.7)" font-size="7.7" fill="#f4f4f4" textLength="29.5" lengthAdjust="spacingAndGlyphs" class="ct">104.0897</text>
<text transform="matrix(1 .0005 0 1 1255.1 414.8)" font-size="7.7" fill="#f4f4f4" textLength="20.8" lengthAdjust="spacingAndGlyphs" class="ct">4.3714</text>
<text transform="matrix(1 .0005 0 1 1251.5 254.6)" font-size="7.7" fill="#e8e8e8" textLength="14.5" lengthAdjust="spacingAndGlyphs" class="ct">0.00</text>
<text transform="matrix(1 .0005 0 1 1251.5 309.6)" font-size="7.7" fill="#e8e8e8" textLength="14.5" lengthAdjust="spacingAndGlyphs" class="ct">0.00</text>
<text transform="matrix(1 .0005 0 1 1251.5 365.1)" font-size="7.7" fill="#e8e8e8" textLength="14.5" lengthAdjust="spacingAndGlyphs" class="ct">0.00</text>
<text transform="matrix(1 .0005 0 1 1251.5 417.6)" font-size="7.7" fill="#e8e8e8" textLength="14.5" lengthAdjust="spacingAndGlyphs" class="ct">0.00</text>
<line x1="187" y1="417.2" x2="187" y2="420" stroke="#c0c0c0" stroke-width="0.8"/>
<text transform="matrix(1 .0005 0 1 186.4 427.9)" font-size="7.7" fill="#f4f4f4" textLength="36.3" lengthAdjust="spacingAndGlyphs" class="ct">6 Oct 2025</text>
<line x1="238.5" y1="417.2" x2="238.5" y2="420" stroke="#c0c0c0" stroke-width="0.8"/>
<text transform="matrix(1 .0005 0 1 237.9 427.9)" font-size="7.7" fill="#f4f4f4" textLength="39.6" lengthAdjust="spacingAndGlyphs" class="ct">6 Oct 08:00</text>
<line x1="290" y1="417.2" x2="290" y2="420" stroke="#c0c0c0" stroke-width="0.8"/>
<text transform="matrix(1 .0005 0 1 289.4 427.9)" font-size="7.7" fill="#f4f4f4" textLength="39.6" lengthAdjust="spacingAndGlyphs" class="ct">6 Oct 16:00</text>
<line x1="341.5" y1="417.2" x2="341.5" y2="420" stroke="#c0c0c0" stroke-width="0.8"/>
<text transform="matrix(1 .0005 0 1 340.9 427.9)" font-size="7.7" fill="#f4f4f4" textLength="39.6" lengthAdjust="spacingAndGlyphs" class="ct">7 Oct 00:00</text>
<line x1="393" y1="417.2" x2="393" y2="420" stroke="#c0c0c0" stroke-width="0.8"/>
<text transform="matrix(1 .0005 0 1 392.4 427.9)" font-size="7.7" fill="#f4f4f4" textLength="39.6" lengthAdjust="spacingAndGlyphs" class="ct">7 Oct 08:00</text>
<line x1="444.5" y1="417.2" x2="444.5" y2="420" stroke="#c0c0c0" stroke-width="0.8"/>
<text transform="matrix(1 .0005 0 1 443.9 427.9)" font-size="7.7" fill="#f4f4f4" textLength="39.6" lengthAdjust="spacingAndGlyphs" class="ct">7 Oct 16:00</text>
<line x1="496" y1="417.2" x2="496" y2="420" stroke="#c0c0c0" stroke-width="0.8"/>
<text transform="matrix(1 .0005 0 1 495.4 427.9)" font-size="7.7" fill="#f4f4f4" textLength="39.6" lengthAdjust="spacingAndGlyphs" class="ct">8 Oct 00:00</text>
<line x1="547.5" y1="417.2" x2="547.5" y2="420" stroke="#c0c0c0" stroke-width="0.8"/>
<text transform="matrix(1 .0005 0 1 546.9 427.9)" font-size="7.7" fill="#f4f4f4" textLength="39.6" lengthAdjust="spacingAndGlyphs" class="ct">8 Oct 08:00</text>
<line x1="599" y1="417.2" x2="599" y2="420" stroke="#c0c0c0" stroke-width="0.8"/>
<text transform="matrix(1 .0005 0 1 598.4 427.9)" font-size="7.7" fill="#f4f4f4" textLength="39.6" lengthAdjust="spacingAndGlyphs" class="ct">8 Oct 16:00</text>
<line x1="650.5" y1="417.2" x2="650.5" y2="420" stroke="#c0c0c0" stroke-width="0.8"/>
<text transform="matrix(1 .0005 0 1 649.9 427.9)" font-size="7.7" fill="#f4f4f4" textLength="39.6" lengthAdjust="spacingAndGlyphs" class="ct">9 Oct 00:00</text>
<line x1="702" y1="417.2" x2="702" y2="420" stroke="#c0c0c0" stroke-width="0.8"/>
<text transform="matrix(1 .0005 0 1 701.4 427.9)" font-size="7.7" fill="#f4f4f4" textLength="39.6" lengthAdjust="spacingAndGlyphs" class="ct">9 Oct 08:00</text>
<line x1="753.5" y1="417.2" x2="753.5" y2="420" stroke="#c0c0c0" stroke-width="0.8"/>
<text transform="matrix(1 .0005 0 1 752.9 427.9)" font-size="7.7" fill="#f4f4f4" textLength="39.6" lengthAdjust="spacingAndGlyphs" class="ct">9 Oct 16:00</text>
<line x1="805" y1="417.2" x2="805" y2="420" stroke="#c0c0c0" stroke-width="0.8"/>
<text transform="matrix(1 .0005 0 1 804.4 427.9)" font-size="7.7" fill="#f4f4f4" textLength="43" lengthAdjust="spacingAndGlyphs" class="ct">10 Oct 00:00</text>
<line x1="856.5" y1="417.2" x2="856.5" y2="420" stroke="#c0c0c0" stroke-width="0.8"/>
<text transform="matrix(1 .0005 0 1 855.9 427.9)" font-size="7.7" fill="#f4f4f4" textLength="43" lengthAdjust="spacingAndGlyphs" class="ct">10 Oct 08:00</text>
<line x1="908" y1="417.2" x2="908" y2="420" stroke="#c0c0c0" stroke-width="0.8"/>
<text transform="matrix(1 .0005 0 1 907.4 427.9)" font-size="7.7" fill="#f4f4f4" textLength="43" lengthAdjust="spacingAndGlyphs" class="ct">10 Oct 16:00</text>
<line x1="959.5" y1="417.2" x2="959.5" y2="420" stroke="#c0c0c0" stroke-width="0.8"/>
<text transform="matrix(1 .0005 0 1 958.9 427.9)" font-size="7.7" fill="#f4f4f4" textLength="43" lengthAdjust="spacingAndGlyphs" class="ct">13 Oct 00:00</text>
<line x1="1011" y1="417.2" x2="1011" y2="420" stroke="#c0c0c0" stroke-width="0.8"/>
<text transform="matrix(1 .0005 0 1 1010.4 427.9)" font-size="7.7" fill="#f4f4f4" textLength="43" lengthAdjust="spacingAndGlyphs" class="ct">13 Oct 08:00</text>
<line x1="1062.5" y1="417.2" x2="1062.5" y2="420" stroke="#c0c0c0" stroke-width="0.8"/>
<text transform="matrix(1 .0005 0 1 1061.9 427.9)" font-size="7.7" fill="#f4f4f4" textLength="43" lengthAdjust="spacingAndGlyphs" class="ct">13 Oct 16:00</text>
<line x1="1114" y1="417.2" x2="1114" y2="420" stroke="#c0c0c0" stroke-width="0.8"/>
<text transform="matrix(1 .0005 0 1 1113.4 427.9)" font-size="7.7" fill="#f4f4f4" textLength="43" lengthAdjust="spacingAndGlyphs" class="ct">14 Oct 00:00</text>
<line x1="1165.5" y1="417.2" x2="1165.5" y2="420" stroke="#c0c0c0" stroke-width="0.8"/>
<text transform="matrix(1 .0005 0 1 1164.9 427.9)" font-size="7.7" fill="#f4f4f4" textLength="43" lengthAdjust="spacingAndGlyphs" class="ct">14 Oct 08:00</text>
<line x1="1217" y1="417.2" x2="1217" y2="420" stroke="#c0c0c0" stroke-width="0.8"/>
<text transform="matrix(1 .0005 0 1 1216.4 427.9)" font-size="7.7" fill="#f4f4f4" textLength="43" lengthAdjust="spacingAndGlyphs" class="ct">14 Oct 16:00</text>
<line x1="183.6" y1="436.2" x2="1280" y2="436.2" stroke="#5a5a5a" stroke-width="0.9"/>
<text transform="matrix(1 .0005 0 1 196.3 446.7)" font-size="9.6" fill="#7e7e7e" textLength="49.7" lengthAdjust="spacingAndGlyphs" stroke="#7e7e7e" stroke-width="0.1">GBPUSD,H1</text>
<text transform="matrix(1 .0005 0 1 263.8 446.7)" font-size="9.6" fill="#7e7e7e" textLength="49.7" lengthAdjust="spacingAndGlyphs" stroke="#7e7e7e" stroke-width="0.1">GBPUSD,H1</text>
<text transform="matrix(1 .0005 0 1 331.3 446.7)" font-size="9.6" fill="#7e7e7e" textLength="82.1" lengthAdjust="spacingAndGlyphs" stroke="#7e7e7e" stroke-width="0.1">EURUSD,H1 (visual)</text>
<text transform="matrix(1 .0005 0 1 431.7 446.7)" font-size="9.6" fill="#7e7e7e" textLength="83.5" lengthAdjust="spacingAndGlyphs" stroke="#7e7e7e" stroke-width="0.1">EURUSD,M1 (visual)</text>
<text transform="matrix(1 .0005 0 1 534.7 446.7)" font-size="9.6" fill="#7e7e7e" textLength="83.5" lengthAdjust="spacingAndGlyphs" stroke="#7e7e7e" stroke-width="0.1">EURUSD,M5 (visual)</text>
<text transform="matrix(1 .0005 0 1 637.6 446.7)" font-size="9.6" fill="#7e7e7e" textLength="83.5" lengthAdjust="spacingAndGlyphs" stroke="#7e7e7e" stroke-width="0.1">EURUSD,M5 (visual)</text>
<text transform="matrix(1 .0005 0 1 740.4 446.7)" font-size="9.6" fill="#7e7e7e" textLength="83.5" lengthAdjust="spacingAndGlyphs" stroke="#7e7e7e" stroke-width="0.1">EURUSD,M5 (visual)</text>
<text transform="matrix(1 .0005 0 1 843.1 446.7)" font-size="9.6" fill="#7e7e7e" textLength="87.6" lengthAdjust="spacingAndGlyphs" stroke="#7e7e7e" stroke-width="0.1">EURUSD,M15 (visual)</text>
<text transform="matrix(1 .0005 0 1 949 446.7)" font-size="9.6" fill="#7e7e7e" textLength="88.2" lengthAdjust="spacingAndGlyphs" stroke="#7e7e7e" stroke-width="0.1">EURUSD,M30 (visual)</text>
<text transform="matrix(1 .0005 0 1 1055.3 446.7)" font-size="9.6" fill="#7e7e7e" textLength="88.2" lengthAdjust="spacingAndGlyphs" stroke="#7e7e7e" stroke-width="0.1">EURUSD,M15 (visual)</text>
<text transform="matrix(1 .0005 0 1 1161.9 446.7)" font-size="9.6" fill="#7e7e7e" textLength="83.5" lengthAdjust="spacingAndGlyphs" stroke="#7e7e7e" stroke-width="0.1">EURUSD,M5 (visual)</text>
<line x1="255.4" y1="438.2" x2="255.4" y2="449.6" stroke="#6a6a6a" stroke-width="0.9"/>
<line x1="322.8" y1="438.2" x2="322.8" y2="449.6" stroke="#6a6a6a" stroke-width="0.9"/>
<line x1="422.4" y1="438.2" x2="422.4" y2="449.6" stroke="#6a6a6a" stroke-width="0.9"/>
<line x1="525.3" y1="438.2" x2="525.3" y2="449.6" stroke="#6a6a6a" stroke-width="0.9"/>
<line x1="628.6" y1="438.2" x2="628.6" y2="449.6" stroke="#6a6a6a" stroke-width="0.9"/>
<line x1="731.2" y1="438.2" x2="731.2" y2="449.6" stroke="#6a6a6a" stroke-width="0.9"/>
<line x1="833.9" y1="438.2" x2="833.9" y2="449.6" stroke="#6a6a6a" stroke-width="0.9"/>
<line x1="940.7" y1="438.2" x2="940.7" y2="449.6" stroke="#6a6a6a" stroke-width="0.9"/>
<line x1="1046.4" y1="438.2" x2="1046.4" y2="449.6" stroke="#6a6a6a" stroke-width="0.9"/>
<line x1="1152.4" y1="438.2" x2="1152.4" y2="449.6" stroke="#6a6a6a" stroke-width="0.9"/>
<line x1="1255.4" y1="438.2" x2="1255.4" y2="449.6" stroke="#6a6a6a" stroke-width="0.9"/>
<path d="M1263.6 441.2 v5.4 l-2.9 -2.7 z" fill="#a8a8a8"/>
<path d="M1275.6 440.6 v6.6 l3.5 -3.3 z" fill="#000"/>
<line x1="0" y1="451.4" x2="1280" y2="451.4" stroke="#a8a8a8" stroke-width="0.9"/>
<line x1="0" y1="452.8" x2="1280" y2="452.8" stroke="#fbfbfb" stroke-width="1.2"/>
<g clip-path="url(#cTester)">
<rect x="12.6" y="455.2" width="1255.6" height="16.24" fill="#ebebeb"/>
<rect x="12.6" y="471.33" width="1255.6" height="16.24" fill="#ffffff"/>
<rect x="12.6" y="487.47" width="1255.6" height="16.24" fill="#ebebeb"/>
<rect x="12.6" y="503.61" width="1255.6" height="16.24" fill="#ffffff"/>
<rect x="12.6" y="519.74" width="1255.6" height="16.24" fill="#ebebeb"/>
<rect x="12.6" y="535.88" width="1255.6" height="16.24" fill="#ffffff"/>
<rect x="12.6" y="552.01" width="1255.6" height="16.24" fill="#ebebeb"/>
<rect x="12.6" y="568.14" width="1255.6" height="16.24" fill="#ffffff"/>
<rect x="12.6" y="584.28" width="1255.6" height="16.24" fill="#ebebeb"/>
<rect x="12.6" y="600.41" width="1255.6" height="16.24" fill="#ffffff"/>
<rect x="12.6" y="616.55" width="1255.6" height="16.24" fill="#ebebeb"/>
<rect x="12.6" y="632.68" width="1255.6" height="16.24" fill="#ffffff"/>
<rect x="12.6" y="648.82" width="1255.6" height="16.24" fill="#ebebeb"/>
<line x1="12.6" y1="455.2" x2="1268.2" y2="455.2" stroke="#a6a6a6" stroke-width="0.9"/>
<line x1="12.6" y1="471.33" x2="1268.2" y2="471.33" stroke="#bdbdbd" stroke-width="0.9"/>
<line x1="12.6" y1="487.47" x2="1268.2" y2="487.47" stroke="#bdbdbd" stroke-width="0.9"/>
<line x1="12.6" y1="503.61" x2="1268.2" y2="503.61" stroke="#bdbdbd" stroke-width="0.9"/>
<line x1="12.6" y1="519.74" x2="1268.2" y2="519.74" stroke="#bdbdbd" stroke-width="0.9"/>
<line x1="12.6" y1="535.88" x2="1268.2" y2="535.88" stroke="#bdbdbd" stroke-width="0.9"/>
<line x1="12.6" y1="552.01" x2="1268.2" y2="552.01" stroke="#bdbdbd" stroke-width="0.9"/>
<line x1="12.6" y1="568.14" x2="1268.2" y2="568.14" stroke="#bdbdbd" stroke-width="0.9"/>
<line x1="12.6" y1="584.28" x2="1268.2" y2="584.28" stroke="#bdbdbd" stroke-width="0.9"/>
<line x1="12.6" y1="600.41" x2="1268.2" y2="600.41" stroke="#bdbdbd" stroke-width="0.9"/>
<line x1="12.6" y1="616.55" x2="1268.2" y2="616.55" stroke="#bdbdbd" stroke-width="0.9"/>
<line x1="12.6" y1="632.68" x2="1268.2" y2="632.68" stroke="#bdbdbd" stroke-width="0.9"/>
<line x1="12.6" y1="648.82" x2="1268.2" y2="648.82" stroke="#bdbdbd" stroke-width="0.9"/>
<line x1="12.6" y1="664.96" x2="1268.2" y2="664.96" stroke="#bdbdbd" stroke-width="0.9"/>
<text transform="matrix(1 .0005 0 1 19.3 466.7)" font-size="9.6" fill="#0a0a0a" textLength="45.6" lengthAdjust="spacingAndGlyphs" stroke="#0a0a0a" stroke-width="0.1">Bars in test</text>
<text transform="matrix(1 .0005 0 1 409.7 466.7)" font-size="9.6" fill="#0a0a0a" textLength="20.08" lengthAdjust="spacingAndGlyphs" text-anchor="end" stroke="#0a0a0a" stroke-width="0.1">2008</text>
<text transform="matrix(1 .0005 0 1 442.2 466.7)" font-size="9.6" fill="#0a0a0a" textLength="63.3" lengthAdjust="spacingAndGlyphs" stroke="#0a0a0a" stroke-width="0.1">Ticks modelled</text>
<text transform="matrix(1 .0005 0 1 835.8 466.7)" font-size="9.6" fill="#0a0a0a" textLength="35.14" lengthAdjust="spacingAndGlyphs" text-anchor="end" stroke="#0a0a0a" stroke-width="0.1">1543932</text>
<text transform="matrix(1 .0005 0 1 868.2 466.7)" font-size="9.6" fill="#0a0a0a" textLength="74.7" lengthAdjust="spacingAndGlyphs" stroke="#0a0a0a" stroke-width="0.1">Modelling quality</text>
<text transform="matrix(1 .0005 0 1 1266.7 466.7)" font-size="9.6" fill="#0a0a0a" textLength="30.08" lengthAdjust="spacingAndGlyphs" text-anchor="end" stroke="#0a0a0a" stroke-width="0.1">76.45%</text>
<text transform="matrix(1 .0005 0 1 19.3 482.83)" font-size="9.6" fill="#0a0a0a" textLength="107.8" lengthAdjust="spacingAndGlyphs" stroke="#0a0a0a" stroke-width="0.1">Mismatched charts errors</text>
<text transform="matrix(1 .0005 0 1 409.7 482.83)" font-size="9.6" fill="#0a0a0a" textLength="5.02" lengthAdjust="spacingAndGlyphs" text-anchor="end" stroke="#0a0a0a" stroke-width="0.1">0</text>
<text transform="matrix(1 .0005 0 1 19.3 498.97)" font-size="9.6" fill="#0a0a0a" textLength="56.9" lengthAdjust="spacingAndGlyphs" stroke="#0a0a0a" stroke-width="0.1">Initial deposit</text>
<text transform="matrix(1 .0005 0 1 409.7 498.97)" font-size="9.6" fill="#0a0a0a" textLength="37.24" lengthAdjust="spacingAndGlyphs" text-anchor="end" stroke="#0a0a0a" stroke-width="0.1">10000.00</text>
<text transform="matrix(1 .0005 0 1 868.2 498.97)" font-size="9.6" fill="#0a0a0a" textLength="28.9" lengthAdjust="spacingAndGlyphs" stroke="#0a0a0a" stroke-width="0.1">Spread</text>
<text transform="matrix(1 .0005 0 1 1266.7 498.97)" font-size="9.6" fill="#0a0a0a" textLength="41.2" lengthAdjust="spacingAndGlyphs" text-anchor="end" stroke="#0a0a0a" stroke-width="0.1">Current (6)</text>
<text transform="matrix(1 .0005 0 1 19.3 515.11)" font-size="9.6" fill="#0a0a0a" textLength="61.9" lengthAdjust="spacingAndGlyphs" stroke="#0a0a0a" stroke-width="0.1">Total net profit</text>
<text transform="matrix(1 .0005 0 1 409.7 515.11)" font-size="9.6" fill="#0a0a0a" textLength="27.2" lengthAdjust="spacingAndGlyphs" text-anchor="end" stroke="#0a0a0a" stroke-width="0.1">572.01</text>
<text transform="matrix(1 .0005 0 1 442.2 515.11)" font-size="9.6" fill="#0a0a0a" textLength="48.9" lengthAdjust="spacingAndGlyphs" stroke="#0a0a0a" stroke-width="0.1">Gross profit</text>
<text transform="matrix(1 .0005 0 1 835.8 515.11)" font-size="9.6" fill="#0a0a0a" textLength="27.2" lengthAdjust="spacingAndGlyphs" text-anchor="end" stroke="#0a0a0a" stroke-width="0.1">641.34</text>
<text transform="matrix(1 .0005 0 1 868.2 515.11)" font-size="9.6" fill="#0a0a0a" textLength="41.9" lengthAdjust="spacingAndGlyphs" stroke="#0a0a0a" stroke-width="0.1">Gross loss</text>
<text transform="matrix(1 .0005 0 1 1266.7 515.11)" font-size="9.6" fill="#0a0a0a" textLength="26.03" lengthAdjust="spacingAndGlyphs" text-anchor="end" stroke="#0a0a0a" stroke-width="0.1">-69.33</text>
<text transform="matrix(1 .0005 0 1 19.3 531.24)" font-size="9.6" fill="#0a0a0a" textLength="50.6" lengthAdjust="spacingAndGlyphs" stroke="#0a0a0a" stroke-width="0.1">Profit factor</text>
<text transform="matrix(1 .0005 0 1 409.7 531.24)" font-size="9.6" fill="#0a0a0a" textLength="17.16" lengthAdjust="spacingAndGlyphs" text-anchor="end" stroke="#0a0a0a" stroke-width="0.1">9.25</text>
<text transform="matrix(1 .0005 0 1 442.2 531.24)" font-size="9.6" fill="#0a0a0a" textLength="68.4" lengthAdjust="spacingAndGlyphs" stroke="#0a0a0a" stroke-width="0.1">Expected payoff</text>
<text transform="matrix(1 .0005 0 1 835.8 531.24)" font-size="9.6" fill="#0a0a0a" textLength="22.18" lengthAdjust="spacingAndGlyphs" text-anchor="end" stroke="#0a0a0a" stroke-width="0.1">95.34</text>
<text transform="matrix(1 .0005 0 1 19.3 547.38)" font-size="9.6" fill="#0a0a0a" textLength="85" lengthAdjust="spacingAndGlyphs" stroke="#0a0a0a" stroke-width="0.1">Absolute drawdown</text>
<text transform="matrix(1 .0005 0 1 409.7 547.38)" font-size="9.6" fill="#0a0a0a" textLength="27.2" lengthAdjust="spacingAndGlyphs" text-anchor="end" stroke="#0a0a0a" stroke-width="0.1">150.39</text>
<text transform="matrix(1 .0005 0 1 442.2 547.38)" font-size="9.6" fill="#0a0a0a" textLength="84.05" lengthAdjust="spacingAndGlyphs" stroke="#0a0a0a" stroke-width="0.1">Maximal drawdown</text>
<text transform="matrix(1 .0005 0 1 835.8 547.38)" font-size="9.6" fill="#0a0a0a" textLength="60.71" lengthAdjust="spacingAndGlyphs" text-anchor="end" stroke="#0a0a0a" stroke-width="0.1">443.49 (4.31%)</text>
<text transform="matrix(1 .0005 0 1 868.2 547.38)" font-size="9.6" fill="#0a0a0a" textLength="80" lengthAdjust="spacingAndGlyphs" stroke="#0a0a0a" stroke-width="0.1">Relative drawdown</text>
<text transform="matrix(1 .0005 0 1 1266.7 547.38)" font-size="9.6" fill="#0a0a0a" textLength="60.71" lengthAdjust="spacingAndGlyphs" text-anchor="end" stroke="#0a0a0a" stroke-width="0.1">4.31% (443.49)</text>
<text transform="matrix(1 .0005 0 1 19.3 563.51)" font-size="9.6" fill="#0a0a0a" textLength="48.3" lengthAdjust="spacingAndGlyphs" stroke="#0a0a0a" stroke-width="0.1">Total trades</text>
<text transform="matrix(1 .0005 0 1 409.7 563.51)" font-size="9.6" fill="#0a0a0a" textLength="5.02" lengthAdjust="spacingAndGlyphs" text-anchor="end" stroke="#0a0a0a" stroke-width="0.1">6</text>
<text transform="matrix(1 .0005 0 1 442.2 563.51)" font-size="9.6" fill="#0a0a0a" textLength="101.3" lengthAdjust="spacingAndGlyphs" stroke="#0a0a0a" stroke-width="0.1">Short positions (won %)</text>
<text transform="matrix(1 .0005 0 1 835.8 563.51)" font-size="9.6" fill="#0a0a0a" textLength="48.57" lengthAdjust="spacingAndGlyphs" text-anchor="end" stroke="#0a0a0a" stroke-width="0.1">2 (100.00%)</text>
<text transform="matrix(1 .0005 0 1 868.2 563.51)" font-size="9.6" fill="#0a0a0a" textLength="100.3" lengthAdjust="spacingAndGlyphs" stroke="#0a0a0a" stroke-width="0.1">Long positions (won %)</text>
<text transform="matrix(1 .0005 0 1 1266.7 563.51)" font-size="9.6" fill="#0a0a0a" textLength="43.55" lengthAdjust="spacingAndGlyphs" text-anchor="end" stroke="#0a0a0a" stroke-width="0.1">4 (75.00%)</text>
<text transform="matrix(1 .0005 0 1 442.2 579.64)" font-size="9.6" fill="#0a0a0a" textLength="101.3" lengthAdjust="spacingAndGlyphs" stroke="#0a0a0a" stroke-width="0.1">Profit trades (% of total)</text>
<text transform="matrix(1 .0005 0 1 835.8 579.64)" font-size="9.6" fill="#0a0a0a" textLength="43.55" lengthAdjust="spacingAndGlyphs" text-anchor="end" stroke="#0a0a0a" stroke-width="0.1">5 (83.33%)</text>
<text transform="matrix(1 .0005 0 1 868.2 579.64)" font-size="9.6" fill="#0a0a0a" textLength="96.1" lengthAdjust="spacingAndGlyphs" stroke="#0a0a0a" stroke-width="0.1">Loss trades (% of total)</text>
<text transform="matrix(1 .0005 0 1 1266.7 579.64)" font-size="9.6" fill="#0a0a0a" textLength="43.55" lengthAdjust="spacingAndGlyphs" text-anchor="end" stroke="#0a0a0a" stroke-width="0.1">1 (16.67%)</text>
<text transform="matrix(1 .0005 0 1 409.7 595.78)" font-size="9.6" fill="#0a0a0a" textLength="27.6" lengthAdjust="spacingAndGlyphs" text-anchor="end" stroke="#0a0a0a" stroke-width="0.1">Largest</text>
<text transform="matrix(1 .0005 0 1 442.2 595.78)" font-size="9.6" fill="#0a0a0a" textLength="47.8" lengthAdjust="spacingAndGlyphs" stroke="#0a0a0a" stroke-width="0.1">profit trade</text>
<text transform="matrix(1 .0005 0 1 835.8 595.78)" font-size="9.6" fill="#0a0a0a" textLength="27.2" lengthAdjust="spacingAndGlyphs" text-anchor="end" stroke="#0a0a0a" stroke-width="0.1">360.00</text>
<text transform="matrix(1 .0005 0 1 868.2 595.78)" font-size="9.6" fill="#0a0a0a" textLength="40.6" lengthAdjust="spacingAndGlyphs" stroke="#0a0a0a" stroke-width="0.1">loss trade</text>
<text transform="matrix(1 .0005 0 1 1266.7 595.78)" font-size="9.6" fill="#0a0a0a" textLength="26.03" lengthAdjust="spacingAndGlyphs" text-anchor="end" stroke="#0a0a0a" stroke-width="0.1">-69.33</text>
<text transform="matrix(1 .0005 0 1 409.7 611.91)" font-size="9.6" fill="#0a0a0a" textLength="31.2" lengthAdjust="spacingAndGlyphs" text-anchor="end" stroke="#0a0a0a" stroke-width="0.1">Average</text>
<text transform="matrix(1 .0005 0 1 442.2 611.91)" font-size="9.6" fill="#0a0a0a" textLength="47.8" lengthAdjust="spacingAndGlyphs" stroke="#0a0a0a" stroke-width="0.1">profit trade</text>
<text transform="matrix(1 .0005 0 1 835.8 611.91)" font-size="9.6" fill="#0a0a0a" textLength="27.2" lengthAdjust="spacingAndGlyphs" text-anchor="end" stroke="#0a0a0a" stroke-width="0.1">128.27</text>
<text transform="matrix(1 .0005 0 1 868.2 611.91)" font-size="9.6" fill="#0a0a0a" textLength="40.6" lengthAdjust="spacingAndGlyphs" stroke="#0a0a0a" stroke-width="0.1">loss trade</text>
<text transform="matrix(1 .0005 0 1 1266.7 611.91)" font-size="9.6" fill="#0a0a0a" textLength="26.03" lengthAdjust="spacingAndGlyphs" text-anchor="end" stroke="#0a0a0a" stroke-width="0.1">-69.33</text>
<text transform="matrix(1 .0005 0 1 409.7 628.05)" font-size="9.6" fill="#0a0a0a" textLength="39.6" lengthAdjust="spacingAndGlyphs" text-anchor="end" stroke="#0a0a0a" stroke-width="0.1">Maximum</text>
<text transform="matrix(1 .0005 0 1 442.2 628.05)" font-size="9.6" fill="#0a0a0a" textLength="146.9" lengthAdjust="spacingAndGlyphs" stroke="#0a0a0a" stroke-width="0.1">consecutive wins (profit in money)</text>
<text transform="matrix(1 .0005 0 1 835.8 628.05)" font-size="9.6" fill="#0a0a0a" textLength="40.67" lengthAdjust="spacingAndGlyphs" text-anchor="end" stroke="#0a0a0a" stroke-width="0.1">3 (270.00)</text>
<text transform="matrix(1 .0005 0 1 868.2 628.05)" font-size="9.6" fill="#0a0a0a" textLength="145.3" lengthAdjust="spacingAndGlyphs" stroke="#0a0a0a" stroke-width="0.1">consecutive losses (loss in money)</text>
<text transform="matrix(1 .0005 0 1 1266.7 628.05)" font-size="9.6" fill="#0a0a0a" textLength="39.5" lengthAdjust="spacingAndGlyphs" text-anchor="end" stroke="#0a0a0a" stroke-width="0.1">1 (-69.33)</text>
<text transform="matrix(1 .0005 0 1 409.7 644.18)" font-size="9.6" fill="#0a0a0a" textLength="33.6" lengthAdjust="spacingAndGlyphs" text-anchor="end" stroke="#0a0a0a" stroke-width="0.1">Maximal</text>
<text transform="matrix(1 .0005 0 1 442.2 644.18)" font-size="9.6" fill="#0a0a0a" textLength="143" lengthAdjust="spacingAndGlyphs" stroke="#0a0a0a" stroke-width="0.1">consecutive profit (count of wins)</text>
<text transform="matrix(1 .0005 0 1 835.8 644.18)" font-size="9.6" fill="#0a0a0a" textLength="40.67" lengthAdjust="spacingAndGlyphs" text-anchor="end" stroke="#0a0a0a" stroke-width="0.1">371.34 (2)</text>
<text transform="matrix(1 .0005 0 1 868.2 644.18)" font-size="9.6" fill="#0a0a0a" textLength="141.1" lengthAdjust="spacingAndGlyphs" stroke="#0a0a0a" stroke-width="0.1">consecutive loss (count of losses)</text>
<text transform="matrix(1 .0005 0 1 1266.7 644.18)" font-size="9.6" fill="#0a0a0a" textLength="39.5" lengthAdjust="spacingAndGlyphs" text-anchor="end" stroke="#0a0a0a" stroke-width="0.1">-69.33 (1)</text>
<text transform="matrix(1 .0005 0 1 409.7 660.32)" font-size="9.6" fill="#0a0a0a" textLength="31.2" lengthAdjust="spacingAndGlyphs" text-anchor="end" stroke="#0a0a0a" stroke-width="0.1">Average</text>
<text transform="matrix(1 .0005 0 1 442.2 660.32)" font-size="9.6" fill="#0a0a0a" textLength="71.9" lengthAdjust="spacingAndGlyphs" stroke="#0a0a0a" stroke-width="0.1">consecutive wins</text>
<text transform="matrix(1 .0005 0 1 835.8 660.32)" font-size="9.6" fill="#0a0a0a" textLength="5.02" lengthAdjust="spacingAndGlyphs" text-anchor="end" stroke="#0a0a0a" stroke-width="0.1">3</text>
<text transform="matrix(1 .0005 0 1 868.2 660.32)" font-size="9.6" fill="#0a0a0a" textLength="78.1" lengthAdjust="spacingAndGlyphs" stroke="#0a0a0a" stroke-width="0.1">consecutive losses</text>
<text transform="matrix(1 .0005 0 1 1266.7 660.32)" font-size="9.6" fill="#0a0a0a" textLength="5.02" lengthAdjust="spacingAndGlyphs" text-anchor="end" stroke="#0a0a0a" stroke-width="0.1">1</text>
<rect x="441" y="473.94" width="826.9" height="11.7" fill="#00ff00"/>
<line x1="441" y1="484.53" x2="852" y2="484.53" stroke="#98a898" stroke-width="2.2"/>
<line x1="852" y1="484.53" x2="992" y2="484.53" stroke="#00c400" stroke-width="2.2"/>
<path d="M1268 473.63 H441 V485.83 H1268" fill="none" stroke="#86b4ea" stroke-width="0.8"/>
</g>
<line x1="12.6" y1="455.2" x2="12.6" y2="659.2" stroke="#a6a6a6" stroke-width="0.9"/>
<path d="M3.6 457.7 l3.8 3.8 M3.6 461.5 l3.8 -3.8" stroke="#111" stroke-width="1.3" fill="none"/>
<rect x="1.2" y="466" width="9.9" height="193.2" fill="url(#gStrip)"/>
<g clip-path="url(#cShot)"><text transform="translate(9.6 678) rotate(-90)" font-size="8.4" fill="#111" stroke="#111" stroke-width="0.25">Tester</text></g>
<rect x="1268.6" y="455.2" width="11.4" height="204" fill="#f0f0f0"/>
<path d="M1272.8 465 l2.9 -3.6 l2.9 3.6" stroke="#505050" stroke-width="1.4" fill="none"/>
<rect x="1270.9" y="469.8" width="9.1" height="163.7" fill="#cdcdcd"/>
<path d="M1272.8 652.5 l2.9 3.6 l2.9 -3.6" stroke="#505050" stroke-width="1.4" fill="none"/>
<g clip-path="url(#cChart)"><use href="#wm" fill="#fff" fill-opacity="0.115"/></g>
<g clip-path="url(#cLight)"><use href="#wms" transform="translate(1.5 1)" fill="#000" fill-opacity="0.045" filter="url(#fBlur)"/></g>
</svg>
</div>
</body>
</html>
